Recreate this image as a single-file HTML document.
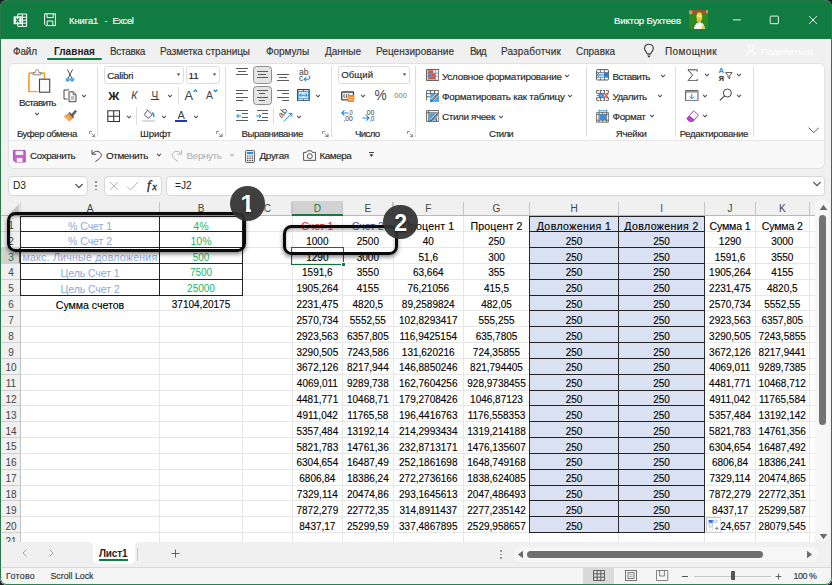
<!DOCTYPE html>
<html lang="ru"><head><meta charset="utf-8"><title>Книга1 - Excel</title><style>
html,body{margin:0;padding:0;background:#1c1e21;}
body{width:832px;height:585px;overflow:hidden;position:relative;font-family:"Liberation Sans",sans-serif;}
#win{position:absolute;left:0;top:0;width:832px;height:585px;background:#f0f0f0;border-radius:7px;overflow:hidden;}
.b{position:absolute;box-sizing:border-box;display:block;}
.t{position:absolute;white-space:nowrap;display:block;}
</style></head><body><div id="win">
<div class="b" style="left:0px;top:0px;width:832px;height:38.5px;background:#107c41;"></div>
<span class="t" style="left:69.00px;top:14.80px;font-size:9.4px;line-height:12px;color:#fff;letter-spacing:-0.049px;-webkit-text-stroke:0.15px #fff;">Книга1</span>
<span class="t" style="left:104.40px;top:14.80px;font-size:9.4px;line-height:12px;color:#fff;">-</span>
<span class="t" style="left:112.40px;top:14.80px;font-size:9.4px;line-height:12px;color:#fff;letter-spacing:-0.357px;-webkit-text-stroke:0.15px #fff;">Excel</span>
<span class="t" style="left:614.00px;top:14.60px;font-size:9.6px;line-height:12px;color:#fff;letter-spacing:-0.168px;-webkit-text-stroke:0.15px #fff;">Виктор Бухтеев</span>
<svg class="b" style="left:731.5px;top:15px;" width="12" height="10" viewBox="0 0 12 10"><path d="M1 4.9H9" stroke="#fff" stroke-width="0.9"/></svg>
<svg class="b" style="left:769px;top:15px;" width="11" height="11" viewBox="0 0 11 11"><rect x="1.2" y="1.1" width="8.2" height="7.6" rx="0.6" fill="none" stroke="#fff" stroke-width="0.9"/></svg>
<svg class="b" style="left:807.5px;top:15px;" width="10" height="10" viewBox="0 0 10 10"><path d="M1 1L9 9M9 1L1 9" stroke="#fff" stroke-width="0.9"/></svg>
<span class="t" style="left:13.00px;top:45.00px;font-size:10px;line-height:13px;color:#333;letter-spacing:-0.146px;-webkit-text-stroke:0.15px #333;">Файл</span>
<span class="t" style="left:110.00px;top:45.00px;font-size:10px;line-height:13px;color:#333;letter-spacing:-0.310px;-webkit-text-stroke:0.15px #333;">Вставка</span>
<span class="t" style="left:160.00px;top:45.00px;font-size:10px;line-height:13px;color:#333;letter-spacing:-0.042px;-webkit-text-stroke:0.15px #333;">Разметка страницы</span>
<span class="t" style="left:266.00px;top:45.00px;font-size:10px;line-height:13px;color:#333;letter-spacing:-0.074px;-webkit-text-stroke:0.15px #333;">Формулы</span>
<span class="t" style="left:325.00px;top:45.00px;font-size:10px;line-height:13px;color:#333;letter-spacing:-0.021px;-webkit-text-stroke:0.15px #333;">Данные</span>
<span class="t" style="left:376.00px;top:45.00px;font-size:10px;line-height:13px;color:#333;letter-spacing:0.056px;-webkit-text-stroke:0.15px #333;">Рецензирование</span>
<span class="t" style="left:470.00px;top:45.00px;font-size:10px;line-height:13px;color:#333;letter-spacing:-0.697px;-webkit-text-stroke:0.15px #333;">Вид</span>
<span class="t" style="left:501.00px;top:45.00px;font-size:10px;line-height:13px;color:#333;letter-spacing:0.153px;-webkit-text-stroke:0.15px #333;">Разработчик</span>
<span class="t" style="left:576.00px;top:45.00px;font-size:10px;line-height:13px;color:#333;letter-spacing:-0.033px;-webkit-text-stroke:0.15px #333;">Справка</span>
<span class="t" style="left:665.00px;top:45.00px;font-size:10px;line-height:13px;color:#333;letter-spacing:0.388px;-webkit-text-stroke:0.15px #333;">Помощник</span>
<span class="t" style="left:54.00px;top:45.00px;font-size:10px;line-height:13px;color:#222;font-weight:bold;letter-spacing:0.047px;">Главная</span>
<div class="b" style="left:47px;top:58px;width:55px;height:2px;background:#107c41;border-radius:1px;"></div>
<span class="t" style="left:761.00px;top:45.50px;font-size:9.6px;line-height:12px;color:#fff;letter-spacing:-0.101px;">Поделиться</span>
<div class="b" style="left:7.5px;top:62.5px;width:817px;height:106px;background:#f9f9f9;border:1px solid #e2e2e2;border-radius:6px;overflow:hidden;"></div>
<div class="b" style="left:8.5px;top:63.5px;width:815px;height:77px;background:#fff;border-radius:5px 5px 0 0;"></div>
<div class="b" style="left:8.5px;top:140.2px;width:815px;height:1.2px;background:#e6e6e6;"></div>
<div class="b" style="left:7.5px;top:175.5px;width:80px;height:20px;background:#fff;border:1px solid #d8d8d8;border-radius:4px;"></div>
<span class="t" style="left:13.00px;top:179.30px;font-size:10.2px;line-height:13px;color:#222;">D3</span>
<svg class="b" style="left:74px;top:182px;" width="10" height="8" viewBox="0 0 10 8"><path d="M1.7000000000000002 2.35 L5 5.65 L8.3 2.35" fill="none" stroke="#4a4a4a" stroke-width="1.25" stroke-linecap="round" stroke-linejoin="round"/></svg>
<div class="b" style="left:95px;top:181.2px;width:1.5px;height:1.5px;background:#7c7c7c;border-radius:1px;"></div>
<div class="b" style="left:95px;top:185px;width:1.5px;height:1.5px;background:#7c7c7c;border-radius:1px;"></div>
<div class="b" style="left:95px;top:188.8px;width:1.5px;height:1.5px;background:#7c7c7c;border-radius:1px;"></div>
<div class="b" style="left:103.5px;top:175.5px;width:58px;height:20px;background:#fff;border:1px solid #d8d8d8;border-radius:4px;"></div>
<svg class="b" style="left:109px;top:181px;" width="10" height="10" viewBox="0 0 10 10"><path d="M1 1L9 9M9 1L1 9" stroke="#b4b4b4" stroke-width="1"/></svg>
<svg class="b" style="left:126px;top:181px;" width="13" height="10" viewBox="0 0 13 10"><path d="M1 5.5L4.5 9L12 1" stroke="#b4b4b4" stroke-width="1" fill="none"/></svg>
<span class="t" style="left:147.00px;top:176.20px;font-size:13.5px;line-height:18px;color:#2a2a2a;font-style:italic;font-family:'Liberation Serif',serif;-webkit-text-stroke:0.3px #2a2a2a;">f</span>
<span class="t" style="left:152.20px;top:180.20px;font-size:10.5px;line-height:14px;color:#2a2a2a;font-style:italic;font-family:'Liberation Serif',serif;-webkit-text-stroke:0.3px #2a2a2a;">x</span>
<div class="b" style="left:165.5px;top:175.5px;width:659px;height:20px;background:#fff;border:1px solid #d8d8d8;border-radius:4px;"></div>
<span class="t" style="left:175.00px;top:179.30px;font-size:10.2px;line-height:13px;color:#222;">=J2</span>
<svg class="b" style="left:812.2px;top:180.2px;" width="10" height="8" viewBox="0 0 10 8"><path d="M1.7000000000000002 2.35 L5 5.65 L8.3 2.35" fill="none" stroke="#4a4a4a" stroke-width="1.25" stroke-linecap="round" stroke-linejoin="round"/></svg>
<svg class="b" style="left:12.5px;top:12.5px;" width="15" height="15" viewBox="0 0 15 15"><path d="M4.8 1H13.6V13.4H4.8Z" fill="none" stroke="#fff" stroke-width="1"/>
<path d="M9.4 1V13.4M4.8 4.2H13.6M4.8 7.2H13.6M4.8 10.2H13.6" stroke="#fff" stroke-width="1"/>
<rect x="0.6" y="3.4" width="8" height="7.8" fill="#fff"/>
<path d="M2.8 5.2L6.4 9.6M6.4 5.2L2.8 9.6" stroke="#107c41" stroke-width="1.2"/></svg>
<svg class="b" style="left:42.6px;top:12.8px;" width="14" height="14" viewBox="0 0 14 14"><path d="M1.6 0.8H12.4V12.6H3L1.6 11.2Z" fill="none" stroke="#fff" stroke-width="1"/>
<path d="M4 0.8V4.6H10.2V0.8M4.2 12.6V8H9.8V12.6" fill="none" stroke="#fff" stroke-width="1"/></svg>
<svg class="b" style="left:689px;top:10px;" width="19" height="19" viewBox="0 0 19 19"><rect width="19" height="19" fill="#2f8a1f"/>
<rect x="0" y="0" width="19" height="4.6" fill="#9a5230"/>
<rect x="0" y="0.4" width="3.4" height="4" fill="#c9986a"/><rect x="17" y="0.2" width="2" height="3.2" fill="#c9986a"/>
<path d="M0 4.6C4 3.6 8 5 11 4.4C14 3.8 17 4.8 19 4.2V7H0Z" fill="#2f8a1f"/>
<ellipse cx="10.4" cy="6.6" rx="2.9" ry="4.4" fill="#f7d21c"/>
<ellipse cx="10" cy="10.2" rx="2.4" ry="2" fill="#e8c02a"/>
<circle cx="9.2" cy="5.8" r="1.1" fill="#fff"/><circle cx="11" cy="5.9" r="0.9" fill="#f3f3ff"/>
<circle cx="9.4" cy="5.9" r="0.35" fill="#333"/>
<path d="M5 19C5.4 15 7.6 12.2 10.4 12.2C13.4 12.2 15.6 14.6 15.8 19Z" fill="#f6f6f6"/>
<rect x="12.8" y="15.6" width="2" height="3.4" fill="#f0c818"/></svg>
<svg class="b" style="left:642.6px;top:43px;" width="11.6" height="15" viewBox="0 0 11.6 15"><path d="M5.9 1.2C8.6 1.2 10.3 3.2 10.3 5.4C10.3 7.6 8.3 9 7.6 10.8H4.2C3.5 9 1.5 7.6 1.5 5.4C1.5 3.2 3.2 1.2 5.9 1.2Z" fill="none" stroke="#3a3a3a" stroke-width="1.1"/>
<path d="M4.3 12H7.5M4.9 13.6H6.9" stroke="#3a3a3a" stroke-width="1.1"/></svg>
<svg class="b" style="left:746px;top:44.4px;" width="11" height="13.4" viewBox="filter:drop-shadow(0 0 0.6px rgba(0,0,0,0.12));"><circle cx="5" cy="3.6" r="2.8" fill="none" stroke="#fff" stroke-width="1.1"/>
<path d="M0.6 13C0.6 9.6 2.4 7.8 5 7.8C6.4 7.8 7.4 8.2 8.2 9M7.6 11.4L10.4 8.6" fill="none" stroke="#fff" stroke-width="1.1"/></svg>
<div class="b" style="left:97.1px;top:66px;width:1px;height:71px;background:#dedede;"></div>
<div class="b" style="left:225.4px;top:66px;width:1px;height:71px;background:#dedede;"></div>
<div class="b" style="left:331.2px;top:66px;width:1px;height:71px;background:#dedede;"></div>
<div class="b" style="left:415.3px;top:66px;width:1px;height:71px;background:#dedede;"></div>
<div class="b" style="left:586.0px;top:66px;width:1px;height:71px;background:#dedede;"></div>
<div class="b" style="left:675.2px;top:66px;width:1px;height:71px;background:#dedede;"></div>
<div class="b" style="left:753.0px;top:66px;width:1px;height:71px;background:#dedede;"></div>
<svg class="b" style="left:27px;top:68px;" width="24" height="26" viewBox="0 0 24 26"><path d="M2 5.2H7.2M13 5.2H17.3V12M11 23.2H2V5.2" fill="none" stroke="#f2a43a" stroke-width="2"/>
<path d="M2.8 6H16.5V23H2.8Z" fill="#fdfdfd"/>
<path d="M6.2 6.8V4.6H8.3C8.3 2.6 9.1 1.6 10.1 1.6C11.1 1.6 11.9 2.6 11.9 4.6H14V6.8Z" fill="#f8f8f8" stroke="#777" stroke-width="0.9"/>
<rect x="12.5" y="11.2" width="10.2" height="13" fill="#fbfbfb" stroke="#444" stroke-width="1.1"/></svg>
<span class="t" style="left:19.00px;top:96.10px;font-size:9.9px;line-height:13px;color:#262626;letter-spacing:-0.621px;-webkit-text-stroke:0.15px #262626;">Вставить</span>
<svg class="b" style="left:32.1px;top:110.4px;" width="10" height="8" viewBox="0 0 10 8"><path d="M3.35 3.175 L5 4.825 L6.65 3.175" fill="none" stroke="#555" stroke-width="1.05" stroke-linecap="round" stroke-linejoin="round"/></svg>
<svg class="b" style="left:64px;top:69px;" width="12" height="13" viewBox="0 0 12 13"><path d="M3.4 0.4L7.9 9.4M8.6 0.4L4.1 9.4" stroke="#444" stroke-width="0.9" fill="none"/>
<circle cx="3.8" cy="10.6" r="1.6" fill="#6cb4ea" stroke="#2a8fdc" stroke-width="0.9"/><circle cx="8.2" cy="10.6" r="1.6" fill="#6cb4ea" stroke="#2a8fdc" stroke-width="0.9"/></svg>
<svg class="b" style="left:62.5px;top:89px;" width="14" height="13.5" viewBox="0 0 14 13.5"><path d="M6 1H1V10H4.5" fill="none" stroke="#444" stroke-width="1"/>
<path d="M6 2.8H10.3L13 5.5V12.7H6Z" fill="#fbfbfb" stroke="#444" stroke-width="1"/>
<path d="M10.2 2.9V5.7H12.9" fill="none" stroke="#444" stroke-width="0.8"/>
<path d="M7.8 8H11.3M7.8 10H11.3" stroke="#666" stroke-width="0.8"/></svg>
<svg class="b" style="left:79.3px;top:91.5px;" width="10" height="8" viewBox="0 0 10 8"><path d="M3.35 3.175 L5 4.825 L6.65 3.175" fill="none" stroke="#555" stroke-width="1.05" stroke-linecap="round" stroke-linejoin="round"/></svg>
<svg class="b" style="left:62.5px;top:108.5px;" width="14.5" height="13.5" viewBox="0 0 14.5 13.5"><path d="M1 7.6L6.3 3.4L10.7 8.7L6.2 12.6Z" fill="#f3923b"/>
<path d="M2.9 8.2L6.2 11.6M4.3 7L7.4 10.4" stroke="#fbe3cc" stroke-width="0.8"/>
<path d="M6.3 3.4L10.7 8.7" stroke="#444" stroke-width="1.2"/>
<path d="M8.4 5.4L12.2 1.2L13.6 2.4L10 6.9Z" fill="#6a6a6a" stroke="#444" stroke-width="0.6"/></svg>
<span class="t" style="left:16.90px;top:127.70px;font-size:9.6px;line-height:12px;color:#262626;letter-spacing:-0.436px;-webkit-text-stroke:0.15px #262626;">Буфер обмена</span>
<svg class="b" style="left:88.5px;top:130.5px;" width="6.5" height="6.5" viewBox="0 0 6.5 6.5"><path d="M0.5 3V0.5H3M6 2.5V6H2.5M2.6 2.6L5.6 5.6M5.8 3.4V5.8H3.4" fill="none" stroke="#666" stroke-width="0.7"/></svg>
<div class="b" style="left:104.3px;top:66px;width:79.5px;height:18px;background:#fff;border:1px solid #dcdcdc;border-radius:3px;"></div>
<span class="t" style="left:107.20px;top:68.50px;font-size:9.9px;line-height:13px;color:#262626;letter-spacing:-0.294px;-webkit-text-stroke:0.15px #262626;">Calibri</span>
<svg class="b" style="left:176.4px;top:73px;" width="5" height="3.4" viewBox="0 0 5 3.4"><path d="M0.7 0.4H4.3L2.5 2.8Z" fill="#444"/></svg>
<div class="b" style="left:186.4px;top:66px;width:33.6px;height:18px;background:#fff;border:1px solid #dcdcdc;border-radius:3px;"></div>
<span class="t" style="left:188.60px;top:68.50px;font-size:9.9px;line-height:13px;color:#262626;-webkit-text-stroke:0.15px #262626;">11</span>
<svg class="b" style="left:211.6px;top:73px;" width="5" height="3.4" viewBox="0 0 5 3.4"><path d="M0.7 0.4H4.3L2.5 2.8Z" fill="#444"/></svg>
<span class="t" style="left:108.92px;top:88.50px;font-size:10.8px;line-height:14px;color:#222;font-weight:bold;transform:scaleX(1.13);">Ж</span>
<span class="t" style="left:131.17px;top:88.50px;font-size:10.4px;line-height:14px;color:#3c3c3c;font-style:italic;">К</span>
<span class="t" style="left:151.47px;top:88.70px;font-size:10px;line-height:13px;color:#3c3c3c;">Ч</span>
<div class="b" style="left:150.9px;top:99.3px;width:7.8px;height:0.9px;background:#333;"></div>
<svg class="b" style="left:164.9px;top:92px;" width="10" height="8" viewBox="0 0 10 8"><path d="M3.35 3.175 L5 4.825 L6.65 3.175" fill="none" stroke="#555" stroke-width="1.05" stroke-linecap="round" stroke-linejoin="round"/></svg>
<div class="b" style="left:177.7px;top:86.6px;width:1px;height:17.900000000000006px;background:#dedede;"></div>
<span class="t" style="left:184.43px;top:86.70px;font-size:12.8px;line-height:17px;color:#404040;">A</span>
<svg class="b" style="left:192.6px;top:88.6px;" width="5" height="3.4" viewBox="0 0 5 3.4"><path d="M0.7 2.9L2.5 1L4.3 2.9" fill="none" stroke="#1e8ad6" stroke-width="1.3"/></svg>
<span class="t" style="left:206.03px;top:89.40px;font-size:10.4px;line-height:14px;color:#404040;">A</span>
<svg class="b" style="left:212.6px;top:88.8px;" width="5" height="3.4" viewBox="0 0 5 3.4"><path d="M0.7 0.7L2.5 2.6L4.3 0.7" fill="none" stroke="#1e8ad6" stroke-width="1.3"/></svg>
<svg class="b" style="left:106.5px;top:109.5px;" width="13.5" height="12.5" viewBox="0 0 13.5 12.5"><path d="M0.8 0.8H12.6V11.6H0.8ZM6.7 0.8V11.6M0.8 6.2H12.6" fill="none" stroke="#333" stroke-width="1.1"/></svg>
<svg class="b" style="left:123.6px;top:112.5px;" width="10" height="8" viewBox="0 0 10 8"><path d="M3.35 3.175 L5 4.825 L6.65 3.175" fill="none" stroke="#555" stroke-width="1.05" stroke-linecap="round" stroke-linejoin="round"/></svg>
<div class="b" style="left:136.4px;top:107px;width:1px;height:18px;background:#dedede;"></div>
<svg class="b" style="left:143px;top:108.5px;" width="12" height="10.5" viewBox="0 0 12 10.5"><path d="M4.6 1.2L9.2 5.6L5.2 9.4L1.2 5.6Z" fill="#fbfbfb" stroke="#444" stroke-width="0.9"/>
<path d="M4.6 1.2L3.6 0.3" stroke="#444" stroke-width="0.9"/>
<path d="M9.2 3.8C10.5 4.4 10.9 6.2 10.6 7.9" fill="none" stroke="#1e8ad6" stroke-width="1.5"/></svg>
<div class="b" style="left:142px;top:119.6px;width:12.8px;height:2.5px;background:#d5dcf0;"></div>
<svg class="b" style="left:158.6px;top:112.5px;" width="10" height="8" viewBox="0 0 10 8"><path d="M3.35 3.175 L5 4.825 L6.65 3.175" fill="none" stroke="#555" stroke-width="1.05" stroke-linecap="round" stroke-linejoin="round"/></svg>
<span class="t" style="left:177.53px;top:107.70px;font-size:11px;line-height:14px;color:#404040;">A</span>
<div class="b" style="left:174.7px;top:119.6px;width:12.6px;height:2.5px;background:#1f3d99;"></div>
<svg class="b" style="left:191px;top:112.5px;" width="10" height="8" viewBox="0 0 10 8"><path d="M3.35 3.175 L5 4.825 L6.65 3.175" fill="none" stroke="#555" stroke-width="1.05" stroke-linecap="round" stroke-linejoin="round"/></svg>
<span class="t" style="left:140.00px;top:127.70px;font-size:9.6px;line-height:12px;color:#262626;letter-spacing:-0.117px;-webkit-text-stroke:0.15px #262626;">Шрифт</span>
<svg class="b" style="left:216.3px;top:130.5px;" width="6.5" height="6.5" viewBox="0 0 6.5 6.5"><path d="M0.5 3V0.5H3M6 2.5V6H2.5M2.6 2.6L5.6 5.6M5.8 3.4V5.8H3.4" fill="none" stroke="#666" stroke-width="0.7"/></svg>
<div class="b" style="left:253px;top:65.6px;width:18.6px;height:18.6px;background:#e4e4e4;border:1px solid #8e8e8e;border-radius:3.5px;"></div>
<div class="b" style="left:253px;top:86px;width:18.6px;height:18.6px;background:#e4e4e4;border:1px solid #8e8e8e;border-radius:3.5px;"></div>
<div class="b" style="left:236.4px;top:68.22500000000001px;width:11.2px;height:0.95px;background:#5c5c5c;"></div>
<div class="b" style="left:238.0px;top:71.325px;width:8.0px;height:0.95px;background:#5c5c5c;"></div>
<div class="b" style="left:236.4px;top:74.42500000000001px;width:11.2px;height:0.95px;background:#5c5c5c;"></div>
<div class="b" style="left:256.6px;top:71.025px;width:11.2px;height:0.95px;background:#5c5c5c;"></div>
<div class="b" style="left:258.20000000000005px;top:74.22500000000001px;width:8.0px;height:0.95px;background:#5c5c5c;"></div>
<div class="b" style="left:256.6px;top:77.42500000000001px;width:11.2px;height:0.95px;background:#5c5c5c;"></div>
<div class="b" style="left:277.4px;top:73.825px;width:11.2px;height:0.95px;background:#5c5c5c;"></div>
<div class="b" style="left:279.0px;top:76.92500000000001px;width:8.0px;height:0.95px;background:#5c5c5c;"></div>
<div class="b" style="left:277.4px;top:80.025px;width:11.2px;height:0.95px;background:#5c5c5c;"></div>
<span class="t" style="left:299.00px;top:66.50px;font-size:8.6px;line-height:11px;color:#444;letter-spacing:-0.083px;">ab</span>
<span class="t" style="left:299.00px;top:72.70px;font-size:8.6px;line-height:11px;color:#444;">c</span>
<svg class="b" style="left:303px;top:74.8px;" width="8" height="7" viewBox="0 0 8 7"><path d="M5.6 0.8C7.4 1.6 7.4 4.2 5 4.2H1.2M3.2 2.2L1.1 4.2L3.2 6.2" fill="none" stroke="#1e8ad6" stroke-width="1.05"/></svg>
<div class="b" style="left:236.4px;top:90.125px;width:11.2px;height:0.95px;background:#5c5c5c;"></div>
<div class="b" style="left:236.4px;top:93.325px;width:6.5px;height:0.95px;background:#5c5c5c;"></div>
<div class="b" style="left:236.4px;top:96.525px;width:11.2px;height:0.95px;background:#5c5c5c;"></div>
<div class="b" style="left:236.4px;top:99.72500000000001px;width:6.5px;height:0.95px;background:#5c5c5c;"></div>
<div class="b" style="left:256.6px;top:90.125px;width:11.2px;height:0.95px;background:#5c5c5c;"></div>
<div class="b" style="left:258.90000000000003px;top:93.325px;width:6.599999999999999px;height:0.95px;background:#5c5c5c;"></div>
<div class="b" style="left:256.6px;top:96.525px;width:11.2px;height:0.95px;background:#5c5c5c;"></div>
<div class="b" style="left:258.90000000000003px;top:99.72500000000001px;width:6.599999999999999px;height:0.95px;background:#5c5c5c;"></div>
<div class="b" style="left:277.4px;top:90.125px;width:11.2px;height:0.95px;background:#5c5c5c;"></div>
<div class="b" style="left:282.09999999999997px;top:93.325px;width:6.499999999999999px;height:0.95px;background:#5c5c5c;"></div>
<div class="b" style="left:277.4px;top:96.525px;width:11.2px;height:0.95px;background:#5c5c5c;"></div>
<div class="b" style="left:282.09999999999997px;top:99.72500000000001px;width:6.499999999999999px;height:0.95px;background:#5c5c5c;"></div>
<svg class="b" style="left:296.8px;top:88.8px;" width="12.8" height="12.4" viewBox="0 0 12.8 12.4"><rect x="0.6" y="0.6" width="11.6" height="11.2" fill="#fff" stroke="#3a3a3a" stroke-width="1.1"/>
<rect x="1.2" y="2.6" width="10.4" height="7.2" fill="#d4e9fa" stroke="#2b8be0" stroke-width="0.9"/>
<path d="M6.4 0.6V2.2M6.4 10.2V11.8" stroke="#3a3a3a" stroke-width="0.8"/>
<path d="M2.6 6.2H10.2M4.3 4.5L2.6 6.2L4.3 7.9M8.5 4.5L10.2 6.2L8.5 7.9" fill="none" stroke="#1e8ad6" stroke-width="1"/></svg>
<svg class="b" style="left:313.4px;top:92px;" width="10" height="8" viewBox="0 0 10 8"><path d="M3.35 3.175 L5 4.825 L6.65 3.175" fill="none" stroke="#555" stroke-width="1.05" stroke-linecap="round" stroke-linejoin="round"/></svg>
<div class="b" style="left:236.4px;top:110.125px;width:11.2px;height:0.95px;background:#5c5c5c;"></div>
<div class="b" style="left:241.70000000000002px;top:113.42500000000001px;width:5.8999999999999995px;height:0.95px;background:#5c5c5c;"></div>
<div class="b" style="left:241.70000000000002px;top:116.72500000000001px;width:5.8999999999999995px;height:0.95px;background:#5c5c5c;"></div>
<div class="b" style="left:236.4px;top:120.025px;width:11.2px;height:0.95px;background:#5c5c5c;"></div>
<svg class="b" style="left:236px;top:112.6px;" width="5.5" height="6" viewBox="0 0 5.5 6"><path d="M5.2 3H0.8M2.6 1L0.7 3L2.6 5" fill="none" stroke="#1e8ad6" stroke-width="1"/></svg>
<div class="b" style="left:256.6px;top:110.125px;width:11.2px;height:0.95px;background:#5c5c5c;"></div>
<div class="b" style="left:261.90000000000003px;top:113.42500000000001px;width:5.8999999999999995px;height:0.95px;background:#5c5c5c;"></div>
<div class="b" style="left:261.90000000000003px;top:116.72500000000001px;width:5.8999999999999995px;height:0.95px;background:#5c5c5c;"></div>
<div class="b" style="left:256.6px;top:120.025px;width:11.2px;height:0.95px;background:#5c5c5c;"></div>
<svg class="b" style="left:256.2px;top:112.6px;" width="5.5" height="6" viewBox="0 0 5.5 6"><path d="M0.3 3H4.7M2.9 1L4.8 3L2.9 5" fill="none" stroke="#1e8ad6" stroke-width="1"/></svg>
<div class="b" style="left:273.2px;top:107px;width:1px;height:18px;background:#dedede;"></div>
<svg class="b" style="left:278.5px;top:109px;" width="14.5" height="13" viewBox="0 0 14.5 13"><text x="0" y="0" font-size="9" fill="#444" font-family="Liberation Sans, sans-serif" transform="translate(2.6,9.4) rotate(-50)">ab</text>
<path d="M4.8 12.4L12.6 4.6M9.6 4.4H12.8V7.6" fill="none" stroke="#1e8ad6" stroke-width="1"/></svg>
<svg class="b" style="left:293.6px;top:112.5px;" width="10" height="8" viewBox="0 0 10 8"><path d="M3.35 3.175 L5 4.825 L6.65 3.175" fill="none" stroke="#555" stroke-width="1.05" stroke-linecap="round" stroke-linejoin="round"/></svg>
<span class="t" style="left:241.50px;top:127.70px;font-size:9.6px;line-height:12px;color:#262626;letter-spacing:-0.390px;-webkit-text-stroke:0.15px #262626;">Выравнивание</span>
<svg class="b" style="left:322.3px;top:130.5px;" width="6.5" height="6.5" viewBox="0 0 6.5 6.5"><path d="M0.5 3V0.5H3M6 2.5V6H2.5M2.6 2.6L5.6 5.6M5.8 3.4V5.8H3.4" fill="none" stroke="#666" stroke-width="0.7"/></svg>
<div class="b" style="left:338.3px;top:66px;width:71.5px;height:18px;background:#fff;border:1px solid #dcdcdc;border-radius:3px;"></div>
<span class="t" style="left:341.20px;top:69.00px;font-size:9.6px;line-height:12px;color:#262626;letter-spacing:0.082px;-webkit-text-stroke:0.15px #262626;">Общий</span>
<svg class="b" style="left:401.8px;top:73px;" width="5" height="3.4" viewBox="0 0 5 3.4"><path d="M0.7 0.4H4.3L2.5 2.8Z" fill="#444"/></svg>
<svg class="b" style="left:340.8px;top:90.6px;" width="14" height="11.6" viewBox="0 0 14 11.6"><rect x="0.7" y="1" width="11.8" height="7.8" rx="0.6" fill="#fafafa" stroke="#444" stroke-width="1.3"/>
<path d="M3.6 2.8C2.6 3.8 2.6 6 3.6 7M6 2.8C5 3.8 5 6 6 7M8.2 2.8C7.4 3.6 7.2 4.4 7.3 5" fill="none" stroke="#444" stroke-width="0.9"/>
<rect x="6.6" y="4.1" width="6.6" height="7.1" rx="1.3" fill="#ee8a2e"/>
<path d="M7.4 6.4H12.4M7.4 8.7H12.4" stroke="#fbe2c8" stroke-width="0.8"/></svg>
<svg class="b" style="left:357.6px;top:92px;" width="10" height="8" viewBox="0 0 10 8"><path d="M3.35 3.175 L5 4.825 L6.65 3.175" fill="none" stroke="#555" stroke-width="1.05" stroke-linecap="round" stroke-linejoin="round"/></svg>
<span class="t" style="left:373.61px;top:86.20px;font-size:14.6px;line-height:19px;color:#4a4a4a;transform:scaleX(0.94);">%</span>
<span class="t" style="left:394.30px;top:90.50px;font-size:7.4px;line-height:10px;color:#777;letter-spacing:0.084px;">000</span>
<svg class="b" style="left:341.2px;top:109.4px;" width="12.6" height="12.8" viewBox="0 0 12.6 12.8"><path d="M7.4 4H0.8M3.4 1.4L0.8 4L3.4 6.6" fill="none" stroke="#1e8ad6" stroke-width="1.1"/>
<text x="7.4" y="5.6" font-size="7.8" textLength="4.4" font-family="Liberation Sans, sans-serif" fill="#333" lengthAdjust="spacingAndGlyphs">,0</text>
<text x="2.4" y="12.2" font-size="7.8" textLength="9.4" font-family="Liberation Sans, sans-serif" fill="#333" lengthAdjust="spacingAndGlyphs">,00</text></svg>
<svg class="b" style="left:361.6px;top:109.4px;" width="13" height="12.8" viewBox="0 0 13 12.8"><text x="3" y="5.6" font-size="7.8" textLength="9.4" font-family="Liberation Sans, sans-serif" fill="#333" lengthAdjust="spacingAndGlyphs">,00</text>
<path d="M0.4 9H7M4.4 6.4L7 9L4.4 11.6" fill="none" stroke="#1e8ad6" stroke-width="1.1"/>
<text x="7.4" y="12.2" font-size="7.8" textLength="5" font-family="Liberation Sans, sans-serif" fill="#333" lengthAdjust="spacingAndGlyphs">,0</text></svg>
<span class="t" style="left:355.00px;top:127.70px;font-size:9.6px;line-height:12px;color:#262626;letter-spacing:-0.602px;-webkit-text-stroke:0.15px #262626;">Число</span>
<svg class="b" style="left:406.9px;top:130.5px;" width="6.5" height="6.5" viewBox="0 0 6.5 6.5"><path d="M0.5 3V0.5H3M6 2.5V6H2.5M2.6 2.6L5.6 5.6M5.8 3.4V5.8H3.4" fill="none" stroke="#666" stroke-width="0.7"/></svg>
<svg class="b" style="left:425.6px;top:69px;" width="13.4" height="12" viewBox="0 0 13.4 12"><rect x="0.6" y="0.6" width="12.2" height="10.8" fill="#fff" stroke="#4a4a4a" stroke-width="0.9"/>
<rect x="2.4" y="1.2" width="4.8" height="2.8" fill="#ea4a4a"/><rect x="2.4" y="4.4" width="2.8" height="2.8" fill="#2f86dc"/><rect x="5.2" y="4.4" width="4" height="2.8" fill="#ea4a4a"/><rect x="2.4" y="7.6" width="6.8" height="2.9" fill="#ea4a4a"/>
<path d="M0.6 4.2H12.8M0.6 7.4H12.8M9.6 0.6V11.4M2.2 0.6V11.4" stroke="#6a6a6a" stroke-width="0.6"/></svg>
<span class="t" style="left:442.00px;top:69.50px;font-size:9.9px;line-height:13px;color:#262626;letter-spacing:-0.259px;-webkit-text-stroke:0.15px #262626;">Условное форматирование</span>
<svg class="b" style="left:562px;top:72px;" width="10" height="8" viewBox="0 0 10 8"><path d="M3.35 3.175 L5 4.825 L6.65 3.175" fill="none" stroke="#555" stroke-width="1.05" stroke-linecap="round" stroke-linejoin="round"/></svg>
<svg class="b" style="left:425.6px;top:90px;" width="13.6" height="12.2" viewBox="0 0 13.6 12.2"><path d="M0.6 10.4V0.6H12.8V3.8M0.6 3.6H12.8M0.6 6.8H4.4M4.4 0.6V4.4M8.6 0.6V4.4" fill="none" stroke="#4a4a4a" stroke-width="0.85"/>
<rect x="4.4" y="4.2" width="9" height="7.6" fill="#4aa0e6"/>
<path d="M5.4 10.6L12.6 3.2" stroke="#fff" stroke-width="3"/>
<path d="M6.6 9.6L12.6 3.2" stroke="#6b6b6b" stroke-width="1.9"/>
<circle cx="5.6" cy="10.6" r="1.7" fill="#1f7fd6"/></svg>
<span class="t" style="left:442.00px;top:89.70px;font-size:9.9px;line-height:13px;color:#262626;letter-spacing:-0.232px;-webkit-text-stroke:0.15px #262626;">Форматировать как таблицу</span>
<svg class="b" style="left:565px;top:92.2px;" width="10" height="8" viewBox="0 0 10 8"><path d="M3.35 3.175 L5 4.825 L6.65 3.175" fill="none" stroke="#555" stroke-width="1.05" stroke-linecap="round" stroke-linejoin="round"/></svg>
<svg class="b" style="left:425.6px;top:109.8px;" width="13.6" height="12.6" viewBox="0 0 13.6 12.6"><path d="M0.6 0.6H12.8V11.4H0.6ZM0.6 2.8H12.8M2.8 0.6V11.4M10.6 2.8V11.4" fill="none" stroke="#4a4a4a" stroke-width="0.85"/>
<rect x="3.2" y="3.2" width="7.2" height="7.4" fill="#4aa0e6"/>
<path d="M4.6 11L12.4 3.2" stroke="#fff" stroke-width="3"/>
<path d="M5.8 10L12.4 3.2" stroke="#6b6b6b" stroke-width="1.9"/>
<circle cx="4.8" cy="11" r="1.7" fill="#1f7fd6"/></svg>
<span class="t" style="left:442.00px;top:110.30px;font-size:9.9px;line-height:13px;color:#262626;letter-spacing:-0.376px;-webkit-text-stroke:0.15px #262626;">Стили ячеек</span>
<svg class="b" style="left:496px;top:112.8px;" width="10" height="8" viewBox="0 0 10 8"><path d="M3.35 3.175 L5 4.825 L6.65 3.175" fill="none" stroke="#555" stroke-width="1.05" stroke-linecap="round" stroke-linejoin="round"/></svg>
<span class="t" style="left:489.00px;top:127.70px;font-size:9.6px;line-height:12px;color:#262626;letter-spacing:-0.731px;-webkit-text-stroke:0.15px #262626;">Стили</span>
<svg class="b" style="left:596.2px;top:69.2px;" width="13" height="11.6" viewBox="0 0 13 11.6"><rect x="0.6" y="0.6" width="11.8" height="10.4" rx="0.8" fill="#fff" stroke="#4a4a4a" stroke-width="0.9"/>
<path d="M0.6 3.6H12.4M0.6 8.2H12.4M4.4 0.6V3.6M8.4 0.6V3.6M4.4 8.2V11M8.4 8.2V11" stroke="#4a4a4a" stroke-width="0.7"/>
<rect x="1.1" y="4" width="10.8" height="3.8" fill="#cfe6f9"/>
<rect x="8" y="3.9" width="4.4" height="4" fill="#2b7cd3"/>
<path d="M7.4 5.9H1.2M3 4.1L1.1 5.9L3 7.7" fill="none" stroke="#2b8be0" stroke-width="1"/></svg>
<span class="t" style="left:612.60px;top:69.50px;font-size:9.9px;line-height:13px;color:#262626;letter-spacing:-0.583px;-webkit-text-stroke:0.15px #262626;">Вставить</span>
<svg class="b" style="left:657.9px;top:71.6px;" width="10" height="8" viewBox="0 0 10 8"><path d="M3.35 3.175 L5 4.825 L6.65 3.175" fill="none" stroke="#555" stroke-width="1.05" stroke-linecap="round" stroke-linejoin="round"/></svg>
<svg class="b" style="left:596.2px;top:90px;" width="13" height="11.4" viewBox="0 0 13 11.4"><path d="M0.6 0.6H12.4M0.6 10.6H12.4M0.6 3.4H12.4M0.6 7.8H12.4M0.6 0.6V3.4M0.6 7.8V10.6M12.4 0.6V3.4M12.4 7.8V10.6M4.4 0.6V3.4M4.4 7.8V10.6M8.4 0.6V3.4M8.4 7.8V10.6" fill="none" stroke="#4a4a4a" stroke-width="0.85" stroke-dasharray="2.4 0.7"/>
<path d="M0.6 5.6H3" stroke="#2b7cd3" stroke-width="0.9"/>
<rect x="3.2" y="3.8" width="4" height="3.6" fill="#5aa4e8" stroke="#2b6fd0" stroke-width="1"/>
<path d="M8.2 3.6L12.2 7.6M12.2 3.6L8.2 7.6" stroke="#e5352b" stroke-width="1.05"/></svg>
<span class="t" style="left:612.60px;top:89.70px;font-size:9.9px;line-height:13px;color:#262626;letter-spacing:-0.528px;-webkit-text-stroke:0.15px #262626;">Удалить</span>
<svg class="b" style="left:654.9px;top:91.8px;" width="10" height="8" viewBox="0 0 10 8"><path d="M3.35 3.175 L5 4.825 L6.65 3.175" fill="none" stroke="#555" stroke-width="1.05" stroke-linecap="round" stroke-linejoin="round"/></svg>
<svg class="b" style="left:596.2px;top:108.8px;" width="13" height="13.8" viewBox="0 0 13 13.8"><path d="M3 1.8H10.8M3 0.6V3M10.8 0.6V3" stroke="#2b8be0" stroke-width="0.9"/>
<path d="M0.6 3.6H12.4V13.2H0.6ZM0.6 5.4H12.4M0.6 11.2H12.4M3 3.6V13.2M10.4 3.6V13.2M6.7 3.6V5.4M6.7 11.2V13.2" fill="none" stroke="#4a4a4a" stroke-width="0.75"/>
<rect x="3.4" y="5.4" width="6.8" height="5.6" fill="#3c8ee0"/></svg>
<span class="t" style="left:612.60px;top:110.30px;font-size:9.9px;line-height:13px;color:#262626;letter-spacing:-0.361px;-webkit-text-stroke:0.15px #262626;">Формат</span>
<svg class="b" style="left:647px;top:112.4px;" width="10" height="8" viewBox="0 0 10 8"><path d="M3.35 3.175 L5 4.825 L6.65 3.175" fill="none" stroke="#555" stroke-width="1.05" stroke-linecap="round" stroke-linejoin="round"/></svg>
<span class="t" style="left:615.70px;top:127.70px;font-size:9.6px;line-height:12px;color:#262626;letter-spacing:-0.200px;-webkit-text-stroke:0.15px #262626;">Ячейки</span>
<svg class="b" style="left:686.8px;top:68.6px;" width="11.2" height="12.6" viewBox="0 0 11.2 12.6"><path d="M10.2 2.6V0.8H0.9L5.6 6.2L0.9 11.8H10.2V10" fill="none" stroke="#444" stroke-width="1"/></svg>
<svg class="b" style="left:702.3px;top:71px;" width="10" height="8" viewBox="0 0 10 8"><path d="M3.35 3.175 L5 4.825 L6.65 3.175" fill="none" stroke="#555" stroke-width="1.05" stroke-linecap="round" stroke-linejoin="round"/></svg>
<span class="t" style="left:718.60px;top:66.00px;font-size:7.4px;line-height:10px;color:#1e8ad6;font-weight:bold;">А</span>
<span class="t" style="left:718.80px;top:74.10px;font-size:7.2px;line-height:9px;color:#333;font-weight:bold;-webkit-text-stroke:0.15px #333;">Я</span>
<svg class="b" style="left:725px;top:72px;" width="8" height="7.4" viewBox="0 0 8 7.4"><path d="M0.6 0.6H7.2L4.8 3.6V6.6L3 5.6V3.6Z" fill="none" stroke="#444" stroke-width="0.9"/></svg>
<svg class="b" style="left:733.9px;top:71px;" width="10" height="8" viewBox="0 0 10 8"><path d="M3.35 3.175 L5 4.825 L6.65 3.175" fill="none" stroke="#555" stroke-width="1.05" stroke-linecap="round" stroke-linejoin="round"/></svg>
<svg class="b" style="left:685.4px;top:90px;" width="13.6" height="11.4" viewBox="0 0 13.6 11.4"><path d="M0.6 0.6H13V10.8H0.6Z" fill="#fdfdfd" stroke="#444" stroke-width="0.9"/><rect x="1" y="1" width="11.6" height="1.7" fill="#9a9a9a"/>
<path d="M6.8 3.8V8.6M4.6 6.6L6.8 8.8L9 6.6" fill="none" stroke="#1e8ad6" stroke-width="1"/></svg>
<svg class="b" style="left:700.4px;top:91.8px;" width="10" height="8" viewBox="0 0 10 8"><path d="M3.35 3.175 L5 4.825 L6.65 3.175" fill="none" stroke="#555" stroke-width="1.05" stroke-linecap="round" stroke-linejoin="round"/></svg>
<svg class="b" style="left:719px;top:88.4px;" width="14" height="13" viewBox="0 0 14 13"><circle cx="8.4" cy="5" r="4" fill="none" stroke="#444" stroke-width="1"/><path d="M5.6 7.8L0.8 12.4" stroke="#444" stroke-width="1.1"/></svg>
<svg class="b" style="left:733.9px;top:91.8px;" width="10" height="8" viewBox="0 0 10 8"><path d="M3.35 3.175 L5 4.825 L6.65 3.175" fill="none" stroke="#555" stroke-width="1.05" stroke-linecap="round" stroke-linejoin="round"/></svg>
<svg class="b" style="left:685.6px;top:110px;" width="13.4" height="12.4" viewBox="0 0 13.4 12.4"><path d="M7.6 0.8L12.6 5L7 11.4H3.4L0.8 8.6Z" fill="#fff" stroke="#b146c2" stroke-width="1"/>
<path d="M3.4 5.6L8.6 9.8L7 11.4H3.4L0.8 8.6Z" fill="#b146c2"/></svg>
<svg class="b" style="left:700.4px;top:112.4px;" width="10" height="8" viewBox="0 0 10 8"><path d="M3.35 3.175 L5 4.825 L6.65 3.175" fill="none" stroke="#555" stroke-width="1.05" stroke-linecap="round" stroke-linejoin="round"/></svg>
<span class="t" style="left:679.70px;top:127.70px;font-size:9.6px;line-height:12px;color:#262626;letter-spacing:-0.345px;-webkit-text-stroke:0.15px #262626;">Редактирование</span>
<svg class="b" style="left:807.8px;top:127.4px;" width="11.4" height="6.6" viewBox="0 0 11.4 6.6"><path d="M0.6 0.6L5.7 5.8L10.8 0.6" fill="none" stroke="#444" stroke-width="0.9"/></svg>
<svg class="b" style="left:13.3px;top:150px;" width="12.8" height="12.6" viewBox="0 0 12.8 12.6"><path d="M0.6 0.6H12.2V12H2.4L0.6 10.2Z" fill="#c465d2" stroke="#a23cb2" stroke-width="0.9"/>
<rect x="2.6" y="0.9" width="7.6" height="4" fill="#f8f8f8"/><rect x="3.8" y="8" width="5.6" height="4" fill="#f8f8f8"/></svg>
<span class="t" style="left:30.10px;top:149.10px;font-size:9.9px;line-height:13px;color:#262626;letter-spacing:-0.444px;-webkit-text-stroke:0.15px #262626;">Сохранить</span>
<svg class="b" style="left:90.6px;top:149.4px;" width="11.6" height="13" viewBox="0 0 11.6 13"><path d="M1 1V5.2H5.2M1.2 5C3.4 1.6 8 1.6 9.8 4.4C11.4 7 9 10 4.4 12.4" fill="none" stroke="#444" stroke-width="1"/></svg>
<span class="t" style="left:106.00px;top:149.10px;font-size:9.9px;line-height:13px;color:#262626;letter-spacing:-0.392px;-webkit-text-stroke:0.15px #262626;">Отменить</span>
<svg class="b" style="left:154.4px;top:151.4px;" width="10" height="8" viewBox="0 0 10 8"><path d="M3.35 3.175 L5 4.825 L6.65 3.175" fill="none" stroke="#555" stroke-width="1.05" stroke-linecap="round" stroke-linejoin="round"/></svg>
<svg class="b" style="left:171.2px;top:149.4px;" width="11.6" height="13" viewBox="0 0 11.6 13"><path d="M10.6 1V5.2H6.4M10.4 5C8.2 1.6 3.6 1.6 1.8 4.4C0.2 7 2.6 10 7.2 12.4" fill="none" stroke="#b4b4b4" stroke-width="1"/></svg>
<span class="t" style="left:186.60px;top:149.10px;font-size:9.9px;line-height:13px;color:#ababab;letter-spacing:-0.389px;">Вернуть</span>
<svg class="b" style="left:227px;top:151.4px;" width="10" height="8" viewBox="0 0 10 8"><path d="M3.35 3.175 L5 4.825 L6.65 3.175" fill="none" stroke="#b0b0b0" stroke-width="1.05" stroke-linecap="round" stroke-linejoin="round"/></svg>
<svg class="b" style="left:245px;top:149.6px;" width="10" height="13" viewBox="0 0 10 13"><rect x="0.6" y="0.6" width="8.8" height="11.8" rx="0.8" fill="#fbfbfb" stroke="#444" stroke-width="0.9"/>
<rect x="2" y="2" width="6" height="2.2" fill="#2c8be0"/>
<path d="M2 6H3.4M4.3 6H5.7M6.6 6H8M2 8.2H3.4M4.3 8.2H5.7M6.6 8.2H8M2 10.4H3.4M4.3 10.4H5.7M6.6 10.4H8" stroke="#444" stroke-width="1.2"/></svg>
<span class="t" style="left:259.40px;top:149.10px;font-size:9.9px;line-height:13px;color:#262626;letter-spacing:-0.285px;-webkit-text-stroke:0.15px #262626;">Другая</span>
<svg class="b" style="left:303.2px;top:150.4px;" width="13.2" height="11.2" viewBox="0 0 13.2 11.2"><path d="M0.6 2.4H3.4L4.4 0.8H8.4L9.4 2.4H12.6V10.4H0.6Z" fill="none" stroke="#444" stroke-width="0.9"/>
<circle cx="6.8" cy="6.2" r="2.5" fill="none" stroke="#444" stroke-width="0.9"/></svg>
<span class="t" style="left:319.50px;top:149.10px;font-size:9.9px;line-height:13px;color:#262626;letter-spacing:-0.450px;-webkit-text-stroke:0.15px #262626;">Камера</span>
<div class="b" style="left:369.4px;top:152.2px;width:4.4px;height:0.9px;background:#444;"></div>
<svg class="b" style="left:369.2px;top:154.4px;" width="4.8" height="3.4" viewBox="0 0 4.8 3.4"><path d="M0.3 0.3H4.5L2.4 3Z" fill="#444"/></svg>
<div class="b" style="left:20.5px;top:216px;width:794.0px;height:325.70000000000005px;background:#fff;"></div>
<div class="b" style="left:292px;top:201.3px;width:51px;height:15px;background:#d2d2d2;border-bottom:2px solid #107c41;"></div>
<span class="t" style="left:86.66px;top:202.00px;font-size:10px;line-height:13px;color:#444;">A</span>
<span class="t" style="left:197.66px;top:202.00px;font-size:10px;line-height:13px;color:#444;">B</span>
<span class="t" style="left:263.64px;top:202.00px;font-size:10px;line-height:13px;color:#444;">C</span>
<span class="t" style="left:313.74px;top:202.00px;font-size:10px;line-height:13px;color:#107c41;">D</span>
<span class="t" style="left:364.51px;top:202.00px;font-size:10px;line-height:13px;color:#444;">E</span>
<span class="t" style="left:425.20px;top:202.00px;font-size:10px;line-height:13px;color:#444;">F</span>
<span class="t" style="left:492.61px;top:202.00px;font-size:10px;line-height:13px;color:#444;">G</span>
<span class="t" style="left:570.39px;top:202.00px;font-size:10px;line-height:13px;color:#444;">H</span>
<span class="t" style="left:660.16px;top:202.00px;font-size:10px;line-height:13px;color:#444;">I</span>
<span class="t" style="left:727.45px;top:202.00px;font-size:10px;line-height:13px;color:#444;">J</span>
<span class="t" style="left:778.91px;top:202.00px;font-size:10px;line-height:13px;color:#444;">K</span>
<div class="b" style="left:158.9px;top:201.5px;width:1.2px;height:14px;background:#c6c6c6;"></div>
<div class="b" style="left:241.9px;top:201.5px;width:1.2px;height:14px;background:#c6c6c6;"></div>
<div class="b" style="left:291.4px;top:201.5px;width:1.2px;height:14px;background:#c6c6c6;"></div>
<div class="b" style="left:342.09999999999997px;top:201.5px;width:1.2px;height:14px;background:#c6c6c6;"></div>
<div class="b" style="left:392.4px;top:201.5px;width:1.2px;height:14px;background:#c6c6c6;"></div>
<div class="b" style="left:462.9px;top:201.5px;width:1.2px;height:14px;background:#c6c6c6;"></div>
<div class="b" style="left:528.9px;top:201.5px;width:1.2px;height:14px;background:#c6c6c6;"></div>
<div class="b" style="left:617.9px;top:201.5px;width:1.2px;height:14px;background:#c6c6c6;"></div>
<div class="b" style="left:704.0px;top:201.5px;width:1.2px;height:14px;background:#c6c6c6;"></div>
<div class="b" style="left:754.6999999999999px;top:201.5px;width:1.2px;height:14px;background:#c6c6c6;"></div>
<div class="b" style="left:808.6px;top:201.5px;width:1.2px;height:14px;background:#c6c6c6;"></div>
<div class="b" style="left:20px;top:202px;width:1px;height:14px;background:#d0d0d0;"></div>
<svg class="b" style="left:8px;top:202px;" width="12" height="13" viewBox="0 0 12 13"><path d="M11 2V12H1Z" fill="#c6c6c6"/></svg>
<span class="t" style="left:8.22px;top:218.91px;font-size:10px;line-height:13px;color:#444;">1</span>
<div class="b" style="left:1px;top:231.325px;width:19.5px;height:1px;background:#d0d0d0;"></div>
<span class="t" style="left:8.22px;top:234.74px;font-size:10px;line-height:13px;color:#444;">2</span>
<div class="b" style="left:1px;top:247.14999999999998px;width:19.5px;height:1px;background:#d0d0d0;"></div>
<div class="b" style="left:1px;top:247.65px;width:19.5px;height:15.825px;background:#d2d2d2;border-right:2px solid #107c41;"></div>
<span class="t" style="left:8.22px;top:250.56px;font-size:10px;line-height:13px;color:#107c41;">3</span>
<div class="b" style="left:1px;top:262.975px;width:19.5px;height:1px;background:#d0d0d0;"></div>
<span class="t" style="left:8.22px;top:266.39px;font-size:10px;line-height:13px;color:#444;">4</span>
<div class="b" style="left:1px;top:278.8px;width:19.5px;height:1px;background:#d0d0d0;"></div>
<span class="t" style="left:8.22px;top:282.21px;font-size:10px;line-height:13px;color:#444;">5</span>
<div class="b" style="left:1px;top:294.625px;width:19.5px;height:1px;background:#d0d0d0;"></div>
<span class="t" style="left:8.22px;top:298.04px;font-size:10px;line-height:13px;color:#444;">6</span>
<div class="b" style="left:1px;top:310.45px;width:19.5px;height:1px;background:#d0d0d0;"></div>
<span class="t" style="left:8.22px;top:313.86px;font-size:10px;line-height:13px;color:#444;">7</span>
<div class="b" style="left:1px;top:326.275px;width:19.5px;height:1px;background:#d0d0d0;"></div>
<span class="t" style="left:8.22px;top:329.69px;font-size:10px;line-height:13px;color:#444;">8</span>
<div class="b" style="left:1px;top:342.09999999999997px;width:19.5px;height:1px;background:#d0d0d0;"></div>
<span class="t" style="left:8.22px;top:345.51px;font-size:10px;line-height:13px;color:#444;">9</span>
<div class="b" style="left:1px;top:357.925px;width:19.5px;height:1px;background:#d0d0d0;"></div>
<span class="t" style="left:5.44px;top:361.34px;font-size:10px;line-height:13px;color:#444;">10</span>
<div class="b" style="left:1px;top:373.74999999999994px;width:19.5px;height:1px;background:#d0d0d0;"></div>
<span class="t" style="left:5.81px;top:377.16px;font-size:10px;line-height:13px;color:#444;">11</span>
<div class="b" style="left:1px;top:389.575px;width:19.5px;height:1px;background:#d0d0d0;"></div>
<span class="t" style="left:5.44px;top:392.99px;font-size:10px;line-height:13px;color:#444;">12</span>
<div class="b" style="left:1px;top:405.4px;width:19.5px;height:1px;background:#d0d0d0;"></div>
<span class="t" style="left:5.44px;top:408.81px;font-size:10px;line-height:13px;color:#444;">13</span>
<div class="b" style="left:1px;top:421.22499999999997px;width:19.5px;height:1px;background:#d0d0d0;"></div>
<span class="t" style="left:5.44px;top:424.64px;font-size:10px;line-height:13px;color:#444;">14</span>
<div class="b" style="left:1px;top:437.05px;width:19.5px;height:1px;background:#d0d0d0;"></div>
<span class="t" style="left:5.44px;top:440.46px;font-size:10px;line-height:13px;color:#444;">15</span>
<div class="b" style="left:1px;top:452.87499999999994px;width:19.5px;height:1px;background:#d0d0d0;"></div>
<span class="t" style="left:5.44px;top:456.29px;font-size:10px;line-height:13px;color:#444;">16</span>
<div class="b" style="left:1px;top:468.7px;width:19.5px;height:1px;background:#d0d0d0;"></div>
<span class="t" style="left:5.44px;top:472.11px;font-size:10px;line-height:13px;color:#444;">17</span>
<div class="b" style="left:1px;top:484.525px;width:19.5px;height:1px;background:#d0d0d0;"></div>
<span class="t" style="left:5.44px;top:487.94px;font-size:10px;line-height:13px;color:#444;">18</span>
<div class="b" style="left:1px;top:500.34999999999997px;width:19.5px;height:1px;background:#d0d0d0;"></div>
<span class="t" style="left:5.44px;top:503.76px;font-size:10px;line-height:13px;color:#444;">19</span>
<div class="b" style="left:1px;top:516.175px;width:19.5px;height:1px;background:#d0d0d0;"></div>
<span class="t" style="left:5.44px;top:519.59px;font-size:10px;line-height:13px;color:#444;">20</span>
<div class="b" style="left:1px;top:532.0px;width:19.5px;height:1px;background:#d0d0d0;"></div>
<span class="t" style="left:5.44px;top:535.41px;font-size:10px;line-height:13px;color:#444;">21</span>
<div class="b" style="left:1px;top:547.825px;width:19.5px;height:1px;background:#d0d0d0;"></div>
<div class="b" style="left:19.9px;top:216px;width:1.2px;height:325.70000000000005px;background:#c2c2c2;"></div>
<div class="b" style="left:20.5px;top:231.325px;width:794.0px;height:1px;background:#e7e7e7;"></div>
<div class="b" style="left:20.5px;top:247.14999999999998px;width:794.0px;height:1px;background:#e7e7e7;"></div>
<div class="b" style="left:20.5px;top:262.975px;width:794.0px;height:1px;background:#e7e7e7;"></div>
<div class="b" style="left:20.5px;top:278.8px;width:794.0px;height:1px;background:#e7e7e7;"></div>
<div class="b" style="left:20.5px;top:294.625px;width:794.0px;height:1px;background:#e7e7e7;"></div>
<div class="b" style="left:20.5px;top:310.45px;width:794.0px;height:1px;background:#e7e7e7;"></div>
<div class="b" style="left:20.5px;top:326.275px;width:794.0px;height:1px;background:#e7e7e7;"></div>
<div class="b" style="left:20.5px;top:342.09999999999997px;width:794.0px;height:1px;background:#e7e7e7;"></div>
<div class="b" style="left:20.5px;top:357.925px;width:794.0px;height:1px;background:#e7e7e7;"></div>
<div class="b" style="left:20.5px;top:373.74999999999994px;width:794.0px;height:1px;background:#e7e7e7;"></div>
<div class="b" style="left:20.5px;top:389.575px;width:794.0px;height:1px;background:#e7e7e7;"></div>
<div class="b" style="left:20.5px;top:405.4px;width:794.0px;height:1px;background:#e7e7e7;"></div>
<div class="b" style="left:20.5px;top:421.22499999999997px;width:794.0px;height:1px;background:#e7e7e7;"></div>
<div class="b" style="left:20.5px;top:437.05px;width:794.0px;height:1px;background:#e7e7e7;"></div>
<div class="b" style="left:20.5px;top:452.87499999999994px;width:794.0px;height:1px;background:#e7e7e7;"></div>
<div class="b" style="left:20.5px;top:468.7px;width:794.0px;height:1px;background:#e7e7e7;"></div>
<div class="b" style="left:20.5px;top:484.525px;width:794.0px;height:1px;background:#e7e7e7;"></div>
<div class="b" style="left:20.5px;top:500.34999999999997px;width:794.0px;height:1px;background:#e7e7e7;"></div>
<div class="b" style="left:20.5px;top:516.175px;width:794.0px;height:1px;background:#e7e7e7;"></div>
<div class="b" style="left:20.5px;top:532.0px;width:794.0px;height:1px;background:#e7e7e7;"></div>
<div class="b" style="left:20.5px;top:547.825px;width:794.0px;height:1px;background:#e7e7e7;"></div>
<div class="b" style="left:159.0px;top:216px;width:1px;height:325.70000000000005px;background:#e7e7e7;"></div>
<div class="b" style="left:242.0px;top:216px;width:1px;height:325.70000000000005px;background:#e7e7e7;"></div>
<div class="b" style="left:291.5px;top:216px;width:1px;height:325.70000000000005px;background:#e7e7e7;"></div>
<div class="b" style="left:342.2px;top:216px;width:1px;height:325.70000000000005px;background:#e7e7e7;"></div>
<div class="b" style="left:392.5px;top:216px;width:1px;height:325.70000000000005px;background:#e7e7e7;"></div>
<div class="b" style="left:463.0px;top:216px;width:1px;height:325.70000000000005px;background:#e7e7e7;"></div>
<div class="b" style="left:529.0px;top:216px;width:1px;height:325.70000000000005px;background:#e7e7e7;"></div>
<div class="b" style="left:618.0px;top:216px;width:1px;height:325.70000000000005px;background:#e7e7e7;"></div>
<div class="b" style="left:704.1px;top:216px;width:1px;height:325.70000000000005px;background:#e7e7e7;"></div>
<div class="b" style="left:754.8px;top:216px;width:1px;height:325.70000000000005px;background:#e7e7e7;"></div>
<div class="b" style="left:808.7px;top:216px;width:1px;height:325.70000000000005px;background:#e7e7e7;"></div>
<div class="b" style="left:529.5px;top:216px;width:175.1px;height:316.5px;background:#d9e1f2;"></div>
<div class="b" style="left:529.5px;top:215.5px;width:175.6px;height:1px;background:#222;"></div>
<div class="b" style="left:529.5px;top:231.325px;width:175.6px;height:1px;background:#222;"></div>
<div class="b" style="left:529.5px;top:247.15px;width:175.6px;height:1px;background:#222;"></div>
<div class="b" style="left:529.5px;top:262.975px;width:175.6px;height:1px;background:#222;"></div>
<div class="b" style="left:529.5px;top:278.8px;width:175.6px;height:1px;background:#222;"></div>
<div class="b" style="left:529.5px;top:294.625px;width:175.6px;height:1px;background:#222;"></div>
<div class="b" style="left:529.5px;top:310.45px;width:175.6px;height:1px;background:#222;"></div>
<div class="b" style="left:529.5px;top:326.275px;width:175.6px;height:1px;background:#222;"></div>
<div class="b" style="left:529.5px;top:342.1px;width:175.6px;height:1px;background:#222;"></div>
<div class="b" style="left:529.5px;top:357.92499999999995px;width:175.6px;height:1px;background:#222;"></div>
<div class="b" style="left:529.5px;top:373.75px;width:175.6px;height:1px;background:#222;"></div>
<div class="b" style="left:529.5px;top:389.575px;width:175.6px;height:1px;background:#222;"></div>
<div class="b" style="left:529.5px;top:405.4px;width:175.6px;height:1px;background:#222;"></div>
<div class="b" style="left:529.5px;top:421.225px;width:175.6px;height:1px;background:#222;"></div>
<div class="b" style="left:529.5px;top:437.04999999999995px;width:175.6px;height:1px;background:#222;"></div>
<div class="b" style="left:529.5px;top:452.875px;width:175.6px;height:1px;background:#222;"></div>
<div class="b" style="left:529.5px;top:468.7px;width:175.6px;height:1px;background:#222;"></div>
<div class="b" style="left:529.5px;top:484.525px;width:175.6px;height:1px;background:#222;"></div>
<div class="b" style="left:529.5px;top:500.34999999999997px;width:175.6px;height:1px;background:#222;"></div>
<div class="b" style="left:529.5px;top:516.175px;width:175.6px;height:1px;background:#222;"></div>
<div class="b" style="left:529.5px;top:532.0px;width:175.6px;height:1px;background:#222;"></div>
<div class="b" style="left:528.9px;top:215.5px;width:1.2px;height:317.5px;background:#2a2a2a;"></div>
<div class="b" style="left:617.9px;top:215.5px;width:1.2px;height:317.5px;background:#2a2a2a;"></div>
<div class="b" style="left:704.0px;top:215.5px;width:1.2px;height:317.5px;background:#2a2a2a;"></div>
<div class="b" style="left:20.5px;top:215.5px;width:222.5px;height:1px;background:#222;"></div>
<div class="b" style="left:20.5px;top:231.325px;width:222.5px;height:1px;background:#222;"></div>
<div class="b" style="left:20.5px;top:247.15px;width:222.5px;height:1px;background:#222;"></div>
<div class="b" style="left:20.5px;top:262.975px;width:222.5px;height:1px;background:#222;"></div>
<div class="b" style="left:20.5px;top:278.8px;width:222.5px;height:1px;background:#222;"></div>
<div class="b" style="left:20.5px;top:294.625px;width:222.5px;height:1px;background:#222;"></div>
<div class="b" style="left:20.0px;top:215.5px;width:1px;height:80.125px;background:#222;"></div>
<div class="b" style="left:159.0px;top:215.5px;width:1px;height:80.125px;background:#222;"></div>
<div class="b" style="left:242.0px;top:215.5px;width:1px;height:80.125px;background:#222;"></div>
<span class="t" style="left:68.00px;top:218.51px;font-size:10.6px;line-height:14px;color:#8ea9db;letter-spacing:-0.083px;">% Счет 1</span>
<span class="t" style="left:193.34px;top:218.51px;font-size:10.6px;line-height:14px;color:#21b868;">4%</span>
<span class="t" style="left:68.00px;top:234.34px;font-size:10.6px;line-height:14px;color:#8ea9db;letter-spacing:-0.083px;">% Счет 2</span>
<span class="t" style="left:190.39px;top:234.34px;font-size:10.6px;line-height:14px;color:#21b868;">10%</span>
<span class="t" style="left:22.50px;top:250.16px;font-size:10.6px;line-height:14px;color:#8ea9db;letter-spacing:0.222px;">макс. Личные довложения</span>
<span class="t" style="left:192.66px;top:250.66px;font-size:10.0px;line-height:13px;color:#21b868;">500</span>
<span class="t" style="left:60.50px;top:265.99px;font-size:10.6px;line-height:14px;color:#8ea9db;letter-spacing:-0.121px;">Цель Счет 1</span>
<span class="t" style="left:189.88px;top:266.49px;font-size:10.0px;line-height:13px;color:#21b868;">7500</span>
<span class="t" style="left:60.50px;top:281.81px;font-size:10.6px;line-height:14px;color:#8ea9db;letter-spacing:-0.121px;">Цель Счет 2</span>
<span class="t" style="left:187.10px;top:282.31px;font-size:10.0px;line-height:13px;color:#21b868;">25000</span>
<span class="t" style="left:55.75px;top:297.64px;font-size:10.6px;line-height:14px;color:#000;letter-spacing:-0.022px;-webkit-text-stroke:0.12px #000;">Сумма счетов</span>
<span class="t" style="left:171.80px;top:298.14px;font-size:10.0px;line-height:13px;color:#000;-webkit-text-stroke:0.12px #000;">37104,20175</span>
<span class="t" style="left:301.35px;top:218.51px;font-size:10.6px;line-height:14px;color:#ff2a2a;letter-spacing:-0.050px;">Счет 1</span>
<span class="t" style="left:351.85px;top:218.51px;font-size:10.6px;line-height:14px;color:#3b5ea8;letter-spacing:-0.050px;">Счет 2</span>
<span class="t" style="left:402.25px;top:218.51px;font-size:10.6px;line-height:14px;color:#000;letter-spacing:0.133px;-webkit-text-stroke:0.12px #000;">Процент 1</span>
<span class="t" style="left:470.50px;top:218.51px;font-size:10.6px;line-height:14px;color:#000;letter-spacing:0.133px;-webkit-text-stroke:0.12px #000;">Процент 2</span>
<span class="t" style="left:536.70px;top:218.51px;font-size:10.6px;line-height:14px;color:#000;letter-spacing:0.383px;-webkit-text-stroke:0.12px #000;">Довложения 1</span>
<span class="t" style="left:624.25px;top:218.51px;font-size:10.6px;line-height:14px;color:#000;letter-spacing:0.383px;-webkit-text-stroke:0.12px #000;">Довложения 2</span>
<span class="t" style="left:709.45px;top:218.51px;font-size:10.6px;line-height:14px;color:#000;letter-spacing:-0.164px;-webkit-text-stroke:0.12px #000;">Сумма 1</span>
<span class="t" style="left:761.75px;top:218.51px;font-size:10.6px;line-height:14px;color:#000;letter-spacing:-0.164px;-webkit-text-stroke:0.12px #000;">Сумма 2</span>
<span class="t" style="left:306.23px;top:234.84px;font-size:10.0px;line-height:13px;color:#000;-webkit-text-stroke:0.12px #000;">1000</span>
<span class="t" style="left:356.73px;top:234.84px;font-size:10.0px;line-height:13px;color:#000;-webkit-text-stroke:0.12px #000;">2500</span>
<span class="t" style="left:422.69px;top:234.84px;font-size:10.0px;line-height:13px;color:#000;-webkit-text-stroke:0.12px #000;">40</span>
<span class="t" style="left:488.16px;top:234.84px;font-size:10.0px;line-height:13px;color:#000;-webkit-text-stroke:0.12px #000;">250</span>
<span class="t" style="left:565.66px;top:234.84px;font-size:10.0px;line-height:13px;color:#000;-webkit-text-stroke:0.12px #000;">250</span>
<span class="t" style="left:653.21px;top:234.84px;font-size:10.0px;line-height:13px;color:#000;-webkit-text-stroke:0.12px #000;">250</span>
<span class="t" style="left:718.83px;top:234.84px;font-size:10.0px;line-height:13px;color:#000;-webkit-text-stroke:0.12px #000;">1290</span>
<span class="t" style="left:771.13px;top:234.84px;font-size:10.0px;line-height:13px;color:#000;-webkit-text-stroke:0.12px #000;">3000</span>
<span class="t" style="left:306.23px;top:250.66px;font-size:10.0px;line-height:13px;color:#000;-webkit-text-stroke:0.12px #000;">1290</span>
<span class="t" style="left:356.73px;top:250.66px;font-size:10.0px;line-height:13px;color:#000;-webkit-text-stroke:0.12px #000;">3000</span>
<span class="t" style="left:418.52px;top:250.66px;font-size:10.0px;line-height:13px;color:#000;-webkit-text-stroke:0.12px #000;">51,6</span>
<span class="t" style="left:488.16px;top:250.66px;font-size:10.0px;line-height:13px;color:#000;-webkit-text-stroke:0.12px #000;">300</span>
<span class="t" style="left:565.66px;top:250.66px;font-size:10.0px;line-height:13px;color:#000;-webkit-text-stroke:0.12px #000;">250</span>
<span class="t" style="left:653.21px;top:250.66px;font-size:10.0px;line-height:13px;color:#000;-webkit-text-stroke:0.12px #000;">250</span>
<span class="t" style="left:714.66px;top:250.66px;font-size:10.0px;line-height:13px;color:#000;-webkit-text-stroke:0.12px #000;">1591,6</span>
<span class="t" style="left:771.13px;top:250.66px;font-size:10.0px;line-height:13px;color:#000;-webkit-text-stroke:0.12px #000;">3550</span>
<span class="t" style="left:302.06px;top:266.49px;font-size:10.0px;line-height:13px;color:#000;-webkit-text-stroke:0.12px #000;">1591,6</span>
<span class="t" style="left:356.73px;top:266.49px;font-size:10.0px;line-height:13px;color:#000;-webkit-text-stroke:0.12px #000;">3550</span>
<span class="t" style="left:412.96px;top:266.49px;font-size:10.0px;line-height:13px;color:#000;-webkit-text-stroke:0.12px #000;">63,664</span>
<span class="t" style="left:488.16px;top:266.49px;font-size:10.0px;line-height:13px;color:#000;-webkit-text-stroke:0.12px #000;">355</span>
<span class="t" style="left:565.66px;top:266.49px;font-size:10.0px;line-height:13px;color:#000;-webkit-text-stroke:0.12px #000;">250</span>
<span class="t" style="left:653.21px;top:266.49px;font-size:10.0px;line-height:13px;color:#000;-webkit-text-stroke:0.12px #000;">250</span>
<span class="t" style="left:709.09px;top:266.49px;font-size:10.0px;line-height:13px;color:#000;-webkit-text-stroke:0.12px #000;">1905,264</span>
<span class="t" style="left:771.13px;top:266.49px;font-size:10.0px;line-height:13px;color:#000;-webkit-text-stroke:0.12px #000;">4155</span>
<span class="t" style="left:296.49px;top:282.31px;font-size:10.0px;line-height:13px;color:#000;-webkit-text-stroke:0.12px #000;">1905,264</span>
<span class="t" style="left:356.73px;top:282.31px;font-size:10.0px;line-height:13px;color:#000;-webkit-text-stroke:0.12px #000;">4155</span>
<span class="t" style="left:407.39px;top:282.31px;font-size:10.0px;line-height:13px;color:#000;-webkit-text-stroke:0.12px #000;">76,21056</span>
<span class="t" style="left:483.99px;top:282.31px;font-size:10.0px;line-height:13px;color:#000;-webkit-text-stroke:0.12px #000;">415,5</span>
<span class="t" style="left:565.66px;top:282.31px;font-size:10.0px;line-height:13px;color:#000;-webkit-text-stroke:0.12px #000;">250</span>
<span class="t" style="left:653.21px;top:282.31px;font-size:10.0px;line-height:13px;color:#000;-webkit-text-stroke:0.12px #000;">250</span>
<span class="t" style="left:709.09px;top:282.31px;font-size:10.0px;line-height:13px;color:#000;-webkit-text-stroke:0.12px #000;">2231,475</span>
<span class="t" style="left:766.96px;top:282.31px;font-size:10.0px;line-height:13px;color:#000;-webkit-text-stroke:0.12px #000;">4820,5</span>
<span class="t" style="left:296.49px;top:298.14px;font-size:10.0px;line-height:13px;color:#000;-webkit-text-stroke:0.12px #000;">2231,475</span>
<span class="t" style="left:352.56px;top:298.14px;font-size:10.0px;line-height:13px;color:#000;-webkit-text-stroke:0.12px #000;">4820,5</span>
<span class="t" style="left:401.83px;top:298.14px;font-size:10.0px;line-height:13px;color:#000;-webkit-text-stroke:0.12px #000;">89,2589824</span>
<span class="t" style="left:481.21px;top:298.14px;font-size:10.0px;line-height:13px;color:#000;-webkit-text-stroke:0.12px #000;">482,05</span>
<span class="t" style="left:565.66px;top:298.14px;font-size:10.0px;line-height:13px;color:#000;-webkit-text-stroke:0.12px #000;">250</span>
<span class="t" style="left:653.21px;top:298.14px;font-size:10.0px;line-height:13px;color:#000;-webkit-text-stroke:0.12px #000;">250</span>
<span class="t" style="left:709.09px;top:298.14px;font-size:10.0px;line-height:13px;color:#000;-webkit-text-stroke:0.12px #000;">2570,734</span>
<span class="t" style="left:764.18px;top:298.14px;font-size:10.0px;line-height:13px;color:#000;-webkit-text-stroke:0.12px #000;">5552,55</span>
<span class="t" style="left:296.49px;top:313.96px;font-size:10.0px;line-height:13px;color:#000;-webkit-text-stroke:0.12px #000;">2570,734</span>
<span class="t" style="left:349.78px;top:313.96px;font-size:10.0px;line-height:13px;color:#000;-webkit-text-stroke:0.12px #000;">5552,55</span>
<span class="t" style="left:399.05px;top:313.96px;font-size:10.0px;line-height:13px;color:#000;-webkit-text-stroke:0.12px #000;">102,8293417</span>
<span class="t" style="left:478.43px;top:313.96px;font-size:10.0px;line-height:13px;color:#000;-webkit-text-stroke:0.12px #000;">555,255</span>
<span class="t" style="left:565.66px;top:313.96px;font-size:10.0px;line-height:13px;color:#000;-webkit-text-stroke:0.12px #000;">250</span>
<span class="t" style="left:653.21px;top:313.96px;font-size:10.0px;line-height:13px;color:#000;-webkit-text-stroke:0.12px #000;">250</span>
<span class="t" style="left:709.09px;top:313.96px;font-size:10.0px;line-height:13px;color:#000;-webkit-text-stroke:0.12px #000;">2923,563</span>
<span class="t" style="left:761.39px;top:313.96px;font-size:10.0px;line-height:13px;color:#000;-webkit-text-stroke:0.12px #000;">6357,805</span>
<span class="t" style="left:296.49px;top:329.79px;font-size:10.0px;line-height:13px;color:#000;-webkit-text-stroke:0.12px #000;">2923,563</span>
<span class="t" style="left:346.99px;top:329.79px;font-size:10.0px;line-height:13px;color:#000;-webkit-text-stroke:0.12px #000;">6357,805</span>
<span class="t" style="left:399.42px;top:329.79px;font-size:10.0px;line-height:13px;color:#000;-webkit-text-stroke:0.12px #000;">116,9425154</span>
<span class="t" style="left:475.64px;top:329.79px;font-size:10.0px;line-height:13px;color:#000;-webkit-text-stroke:0.12px #000;">635,7805</span>
<span class="t" style="left:565.66px;top:329.79px;font-size:10.0px;line-height:13px;color:#000;-webkit-text-stroke:0.12px #000;">250</span>
<span class="t" style="left:653.21px;top:329.79px;font-size:10.0px;line-height:13px;color:#000;-webkit-text-stroke:0.12px #000;">250</span>
<span class="t" style="left:709.09px;top:329.79px;font-size:10.0px;line-height:13px;color:#000;-webkit-text-stroke:0.12px #000;">3290,505</span>
<span class="t" style="left:758.61px;top:329.79px;font-size:10.0px;line-height:13px;color:#000;-webkit-text-stroke:0.12px #000;">7243,5855</span>
<span class="t" style="left:296.49px;top:345.61px;font-size:10.0px;line-height:13px;color:#000;-webkit-text-stroke:0.12px #000;">3290,505</span>
<span class="t" style="left:346.99px;top:345.61px;font-size:10.0px;line-height:13px;color:#000;-webkit-text-stroke:0.12px #000;">7243,586</span>
<span class="t" style="left:401.83px;top:345.61px;font-size:10.0px;line-height:13px;color:#000;-webkit-text-stroke:0.12px #000;">131,620216</span>
<span class="t" style="left:472.86px;top:345.61px;font-size:10.0px;line-height:13px;color:#000;-webkit-text-stroke:0.12px #000;">724,35855</span>
<span class="t" style="left:565.66px;top:345.61px;font-size:10.0px;line-height:13px;color:#000;-webkit-text-stroke:0.12px #000;">250</span>
<span class="t" style="left:653.21px;top:345.61px;font-size:10.0px;line-height:13px;color:#000;-webkit-text-stroke:0.12px #000;">250</span>
<span class="t" style="left:709.09px;top:345.61px;font-size:10.0px;line-height:13px;color:#000;-webkit-text-stroke:0.12px #000;">3672,126</span>
<span class="t" style="left:758.61px;top:345.61px;font-size:10.0px;line-height:13px;color:#000;-webkit-text-stroke:0.12px #000;">8217,9441</span>
<span class="t" style="left:296.49px;top:361.44px;font-size:10.0px;line-height:13px;color:#000;-webkit-text-stroke:0.12px #000;">3672,126</span>
<span class="t" style="left:346.99px;top:361.44px;font-size:10.0px;line-height:13px;color:#000;-webkit-text-stroke:0.12px #000;">8217,944</span>
<span class="t" style="left:399.05px;top:361.44px;font-size:10.0px;line-height:13px;color:#000;-webkit-text-stroke:0.12px #000;">146,8850246</span>
<span class="t" style="left:470.08px;top:361.44px;font-size:10.0px;line-height:13px;color:#000;-webkit-text-stroke:0.12px #000;">821,794405</span>
<span class="t" style="left:565.66px;top:361.44px;font-size:10.0px;line-height:13px;color:#000;-webkit-text-stroke:0.12px #000;">250</span>
<span class="t" style="left:653.21px;top:361.44px;font-size:10.0px;line-height:13px;color:#000;-webkit-text-stroke:0.12px #000;">250</span>
<span class="t" style="left:709.47px;top:361.44px;font-size:10.0px;line-height:13px;color:#000;-webkit-text-stroke:0.12px #000;">4069,011</span>
<span class="t" style="left:758.61px;top:361.44px;font-size:10.0px;line-height:13px;color:#000;-webkit-text-stroke:0.12px #000;">9289,7385</span>
<span class="t" style="left:296.87px;top:377.26px;font-size:10.0px;line-height:13px;color:#000;-webkit-text-stroke:0.12px #000;">4069,011</span>
<span class="t" style="left:346.99px;top:377.26px;font-size:10.0px;line-height:13px;color:#000;-webkit-text-stroke:0.12px #000;">9289,738</span>
<span class="t" style="left:399.05px;top:377.26px;font-size:10.0px;line-height:13px;color:#000;-webkit-text-stroke:0.12px #000;">162,7604256</span>
<span class="t" style="left:467.30px;top:377.26px;font-size:10.0px;line-height:13px;color:#000;-webkit-text-stroke:0.12px #000;">928,9738455</span>
<span class="t" style="left:565.66px;top:377.26px;font-size:10.0px;line-height:13px;color:#000;-webkit-text-stroke:0.12px #000;">250</span>
<span class="t" style="left:653.21px;top:377.26px;font-size:10.0px;line-height:13px;color:#000;-webkit-text-stroke:0.12px #000;">250</span>
<span class="t" style="left:709.09px;top:377.26px;font-size:10.0px;line-height:13px;color:#000;-webkit-text-stroke:0.12px #000;">4481,771</span>
<span class="t" style="left:758.61px;top:377.26px;font-size:10.0px;line-height:13px;color:#000;-webkit-text-stroke:0.12px #000;">10468,712</span>
<span class="t" style="left:296.49px;top:393.09px;font-size:10.0px;line-height:13px;color:#000;-webkit-text-stroke:0.12px #000;">4481,771</span>
<span class="t" style="left:346.99px;top:393.09px;font-size:10.0px;line-height:13px;color:#000;-webkit-text-stroke:0.12px #000;">10468,71</span>
<span class="t" style="left:399.05px;top:393.09px;font-size:10.0px;line-height:13px;color:#000;-webkit-text-stroke:0.12px #000;">179,2708426</span>
<span class="t" style="left:470.08px;top:393.09px;font-size:10.0px;line-height:13px;color:#000;-webkit-text-stroke:0.12px #000;">1046,87123</span>
<span class="t" style="left:565.66px;top:393.09px;font-size:10.0px;line-height:13px;color:#000;-webkit-text-stroke:0.12px #000;">250</span>
<span class="t" style="left:653.21px;top:393.09px;font-size:10.0px;line-height:13px;color:#000;-webkit-text-stroke:0.12px #000;">250</span>
<span class="t" style="left:709.47px;top:393.09px;font-size:10.0px;line-height:13px;color:#000;-webkit-text-stroke:0.12px #000;">4911,042</span>
<span class="t" style="left:758.99px;top:393.09px;font-size:10.0px;line-height:13px;color:#000;-webkit-text-stroke:0.12px #000;">11765,584</span>
<span class="t" style="left:296.87px;top:408.91px;font-size:10.0px;line-height:13px;color:#000;-webkit-text-stroke:0.12px #000;">4911,042</span>
<span class="t" style="left:347.37px;top:408.91px;font-size:10.0px;line-height:13px;color:#000;-webkit-text-stroke:0.12px #000;">11765,58</span>
<span class="t" style="left:399.05px;top:408.91px;font-size:10.0px;line-height:13px;color:#000;-webkit-text-stroke:0.12px #000;">196,4416763</span>
<span class="t" style="left:467.67px;top:408.91px;font-size:10.0px;line-height:13px;color:#000;-webkit-text-stroke:0.12px #000;">1176,558353</span>
<span class="t" style="left:565.66px;top:408.91px;font-size:10.0px;line-height:13px;color:#000;-webkit-text-stroke:0.12px #000;">250</span>
<span class="t" style="left:653.21px;top:408.91px;font-size:10.0px;line-height:13px;color:#000;-webkit-text-stroke:0.12px #000;">250</span>
<span class="t" style="left:709.09px;top:408.91px;font-size:10.0px;line-height:13px;color:#000;-webkit-text-stroke:0.12px #000;">5357,484</span>
<span class="t" style="left:758.61px;top:408.91px;font-size:10.0px;line-height:13px;color:#000;-webkit-text-stroke:0.12px #000;">13192,142</span>
<span class="t" style="left:296.49px;top:424.74px;font-size:10.0px;line-height:13px;color:#000;-webkit-text-stroke:0.12px #000;">5357,484</span>
<span class="t" style="left:346.99px;top:424.74px;font-size:10.0px;line-height:13px;color:#000;-webkit-text-stroke:0.12px #000;">13192,14</span>
<span class="t" style="left:399.05px;top:424.74px;font-size:10.0px;line-height:13px;color:#000;-webkit-text-stroke:0.12px #000;">214,2993434</span>
<span class="t" style="left:467.30px;top:424.74px;font-size:10.0px;line-height:13px;color:#000;-webkit-text-stroke:0.12px #000;">1319,214188</span>
<span class="t" style="left:565.66px;top:424.74px;font-size:10.0px;line-height:13px;color:#000;-webkit-text-stroke:0.12px #000;">250</span>
<span class="t" style="left:653.21px;top:424.74px;font-size:10.0px;line-height:13px;color:#000;-webkit-text-stroke:0.12px #000;">250</span>
<span class="t" style="left:709.09px;top:424.74px;font-size:10.0px;line-height:13px;color:#000;-webkit-text-stroke:0.12px #000;">5821,783</span>
<span class="t" style="left:758.61px;top:424.74px;font-size:10.0px;line-height:13px;color:#000;-webkit-text-stroke:0.12px #000;">14761,356</span>
<span class="t" style="left:296.49px;top:440.56px;font-size:10.0px;line-height:13px;color:#000;-webkit-text-stroke:0.12px #000;">5821,783</span>
<span class="t" style="left:346.99px;top:440.56px;font-size:10.0px;line-height:13px;color:#000;-webkit-text-stroke:0.12px #000;">14761,36</span>
<span class="t" style="left:399.05px;top:440.56px;font-size:10.0px;line-height:13px;color:#000;-webkit-text-stroke:0.12px #000;">232,8713171</span>
<span class="t" style="left:467.30px;top:440.56px;font-size:10.0px;line-height:13px;color:#000;-webkit-text-stroke:0.12px #000;">1476,135607</span>
<span class="t" style="left:565.66px;top:440.56px;font-size:10.0px;line-height:13px;color:#000;-webkit-text-stroke:0.12px #000;">250</span>
<span class="t" style="left:653.21px;top:440.56px;font-size:10.0px;line-height:13px;color:#000;-webkit-text-stroke:0.12px #000;">250</span>
<span class="t" style="left:709.09px;top:440.56px;font-size:10.0px;line-height:13px;color:#000;-webkit-text-stroke:0.12px #000;">6304,654</span>
<span class="t" style="left:758.61px;top:440.56px;font-size:10.0px;line-height:13px;color:#000;-webkit-text-stroke:0.12px #000;">16487,492</span>
<span class="t" style="left:296.49px;top:456.39px;font-size:10.0px;line-height:13px;color:#000;-webkit-text-stroke:0.12px #000;">6304,654</span>
<span class="t" style="left:346.99px;top:456.39px;font-size:10.0px;line-height:13px;color:#000;-webkit-text-stroke:0.12px #000;">16487,49</span>
<span class="t" style="left:399.05px;top:456.39px;font-size:10.0px;line-height:13px;color:#000;-webkit-text-stroke:0.12px #000;">252,1861698</span>
<span class="t" style="left:467.30px;top:456.39px;font-size:10.0px;line-height:13px;color:#000;-webkit-text-stroke:0.12px #000;">1648,749168</span>
<span class="t" style="left:565.66px;top:456.39px;font-size:10.0px;line-height:13px;color:#000;-webkit-text-stroke:0.12px #000;">250</span>
<span class="t" style="left:653.21px;top:456.39px;font-size:10.0px;line-height:13px;color:#000;-webkit-text-stroke:0.12px #000;">250</span>
<span class="t" style="left:711.88px;top:456.39px;font-size:10.0px;line-height:13px;color:#000;-webkit-text-stroke:0.12px #000;">6806,84</span>
<span class="t" style="left:758.61px;top:456.39px;font-size:10.0px;line-height:13px;color:#000;-webkit-text-stroke:0.12px #000;">18386,241</span>
<span class="t" style="left:299.28px;top:472.21px;font-size:10.0px;line-height:13px;color:#000;-webkit-text-stroke:0.12px #000;">6806,84</span>
<span class="t" style="left:346.99px;top:472.21px;font-size:10.0px;line-height:13px;color:#000;-webkit-text-stroke:0.12px #000;">18386,24</span>
<span class="t" style="left:399.05px;top:472.21px;font-size:10.0px;line-height:13px;color:#000;-webkit-text-stroke:0.12px #000;">272,2736166</span>
<span class="t" style="left:467.30px;top:472.21px;font-size:10.0px;line-height:13px;color:#000;-webkit-text-stroke:0.12px #000;">1838,624085</span>
<span class="t" style="left:565.66px;top:472.21px;font-size:10.0px;line-height:13px;color:#000;-webkit-text-stroke:0.12px #000;">250</span>
<span class="t" style="left:653.21px;top:472.21px;font-size:10.0px;line-height:13px;color:#000;-webkit-text-stroke:0.12px #000;">250</span>
<span class="t" style="left:709.47px;top:472.21px;font-size:10.0px;line-height:13px;color:#000;-webkit-text-stroke:0.12px #000;">7329,114</span>
<span class="t" style="left:758.61px;top:472.21px;font-size:10.0px;line-height:13px;color:#000;-webkit-text-stroke:0.12px #000;">20474,865</span>
<span class="t" style="left:296.87px;top:488.04px;font-size:10.0px;line-height:13px;color:#000;-webkit-text-stroke:0.12px #000;">7329,114</span>
<span class="t" style="left:346.99px;top:488.04px;font-size:10.0px;line-height:13px;color:#000;-webkit-text-stroke:0.12px #000;">20474,86</span>
<span class="t" style="left:399.05px;top:488.04px;font-size:10.0px;line-height:13px;color:#000;-webkit-text-stroke:0.12px #000;">293,1645613</span>
<span class="t" style="left:467.30px;top:488.04px;font-size:10.0px;line-height:13px;color:#000;-webkit-text-stroke:0.12px #000;">2047,486493</span>
<span class="t" style="left:565.66px;top:488.04px;font-size:10.0px;line-height:13px;color:#000;-webkit-text-stroke:0.12px #000;">250</span>
<span class="t" style="left:653.21px;top:488.04px;font-size:10.0px;line-height:13px;color:#000;-webkit-text-stroke:0.12px #000;">250</span>
<span class="t" style="left:709.09px;top:488.04px;font-size:10.0px;line-height:13px;color:#000;-webkit-text-stroke:0.12px #000;">7872,279</span>
<span class="t" style="left:758.61px;top:488.04px;font-size:10.0px;line-height:13px;color:#000;-webkit-text-stroke:0.12px #000;">22772,351</span>
<span class="t" style="left:296.49px;top:503.86px;font-size:10.0px;line-height:13px;color:#000;-webkit-text-stroke:0.12px #000;">7872,279</span>
<span class="t" style="left:346.99px;top:503.86px;font-size:10.0px;line-height:13px;color:#000;-webkit-text-stroke:0.12px #000;">22772,35</span>
<span class="t" style="left:399.42px;top:503.86px;font-size:10.0px;line-height:13px;color:#000;-webkit-text-stroke:0.12px #000;">314,8911437</span>
<span class="t" style="left:467.30px;top:503.86px;font-size:10.0px;line-height:13px;color:#000;-webkit-text-stroke:0.12px #000;">2277,235142</span>
<span class="t" style="left:565.66px;top:503.86px;font-size:10.0px;line-height:13px;color:#000;-webkit-text-stroke:0.12px #000;">250</span>
<span class="t" style="left:653.21px;top:503.86px;font-size:10.0px;line-height:13px;color:#000;-webkit-text-stroke:0.12px #000;">250</span>
<span class="t" style="left:711.88px;top:503.86px;font-size:10.0px;line-height:13px;color:#000;-webkit-text-stroke:0.12px #000;">8437,17</span>
<span class="t" style="left:758.61px;top:503.86px;font-size:10.0px;line-height:13px;color:#000;-webkit-text-stroke:0.12px #000;">25299,587</span>
<span class="t" style="left:299.28px;top:519.69px;font-size:10.0px;line-height:13px;color:#000;-webkit-text-stroke:0.12px #000;">8437,17</span>
<span class="t" style="left:346.99px;top:519.69px;font-size:10.0px;line-height:13px;color:#000;-webkit-text-stroke:0.12px #000;">25299,59</span>
<span class="t" style="left:399.05px;top:519.69px;font-size:10.0px;line-height:13px;color:#000;-webkit-text-stroke:0.12px #000;">337,4867895</span>
<span class="t" style="left:467.30px;top:519.69px;font-size:10.0px;line-height:13px;color:#000;-webkit-text-stroke:0.12px #000;">2529,958657</span>
<span class="t" style="left:565.66px;top:519.69px;font-size:10.0px;line-height:13px;color:#000;-webkit-text-stroke:0.12px #000;">250</span>
<span class="t" style="left:653.21px;top:519.69px;font-size:10.0px;line-height:13px;color:#000;-webkit-text-stroke:0.12px #000;">250</span>
<span class="t" style="left:709.09px;top:519.69px;font-size:10.0px;line-height:13px;color:#000;-webkit-text-stroke:0.12px #000;">9024,657</span>
<span class="t" style="left:758.61px;top:519.69px;font-size:10.0px;line-height:13px;color:#000;-webkit-text-stroke:0.12px #000;">28079,545</span>
<div class="b" style="left:1px;top:215.4px;width:813.5px;height:1.1px;background:#b9b9b9;"></div>
<div class="b" style="left:292px;top:214.4px;width:51px;height:2px;background:#107c41;"></div>
<div class="b" style="left:290.8px;top:246.65px;width:53.2px;height:18.825px;border:1.9px solid #0f703b;"></div>
<div class="b" style="left:340.9px;top:261.675px;width:5.5px;height:5.5px;background:#107c41;border:1px solid #fff;"></div>
<svg class="b" style="left:706px;top:517.0749999999999px;" width="15.4" height="15.8" viewBox="0 0 15.4 15.8"><rect x="0" y="0" width="15.4" height="15.8" fill="#fff"/><rect x="0.5" y="0.5" width="14.4" height="14.8" fill="#fff" stroke="#c4c4c4"/><rect x="2.6" y="3" width="4.2" height="2.8" fill="#2f6fe8"/><rect x="7.4" y="3.2" width="3.8" height="2.4" fill="#fff" stroke="#b0b0b0" stroke-width="0.7"/><rect x="2.9" y="6.8" width="3.8" height="2.4" fill="#fff" stroke="#b0b0b0" stroke-width="0.7"/><path d="M2.6 10.6H6.8V13H2.6" fill="none" stroke="#b8b8b8" stroke-width="0.7" stroke-dasharray="1.2 0.8"/><path d="M10.8 9.6V13.2M9 11.4H12.6" stroke="#8a8a8a" stroke-width="1"/></svg>
<div class="b" style="left:1px;top:541.7px;width:831px;height:45px;background:#f0f0f0;"></div>
<div class="b" style="left:814.5px;top:199px;width:17px;height:343px;background:#f0f0f0;"></div>
<div class="b" style="left:815px;top:200px;width:15px;height:341px;background:#f6f6f6;border-radius:7px;"></div>
<svg class="b" style="left:818.5px;top:204px;" width="9" height="7" viewBox="0 0 9 7"><path d="M4.5 0.8L8.3 6H0.7Z" fill="#6b6b6b"/></svg>
<div class="b" style="left:819.4px;top:215px;width:6.9px;height:209.8px;background:#737373;border-radius:3.5px;"></div>
<svg class="b" style="left:818.5px;top:533px;" width="9" height="7" viewBox="0 0 9 7"><path d="M4.5 6.2L8.3 1H0.7Z" fill="#6b6b6b"/></svg>
<svg class="b" style="left:20px;top:548px;" width="10" height="10" viewBox="0 0 10 10"><path d="M6.5 1.5L3 5L6.5 8.5" fill="none" stroke="#a6a6a6" stroke-width="1"/></svg>
<svg class="b" style="left:46px;top:548px;" width="10" height="10" viewBox="0 0 10 10"><path d="M3.5 1.5L7 5L3.5 8.5" fill="none" stroke="#a6a6a6" stroke-width="1"/></svg>
<div class="b" style="left:92.5px;top:541px;width:42px;height:23px;background:#fff;border-radius:0 0 5px 5px;"></div>
<div class="b" style="left:88.5px;top:541.7px;width:4px;height:4px;background:radial-gradient(circle at 0 100%, #f0f0f0 3.6px, #fff 4.2px);"></div>
<div class="b" style="left:134.5px;top:541.7px;width:4px;height:4px;background:radial-gradient(circle at 100% 100%, #f0f0f0 3.6px, #fff 4.2px);"></div>
<span class="t" style="left:98.95px;top:546.50px;font-size:10px;line-height:13px;color:#222;font-weight:bold;letter-spacing:-0.137px;">Лист1</span>
<div class="b" style="left:98.5px;top:559.2px;width:29.5px;height:1.8px;background:#107c41;"></div>
<div class="b" style="left:137px;top:547.5px;width:1px;height:13px;background:#c8c8c8;"></div>
<svg class="b" style="left:170.5px;top:548.5px;" width="9" height="9" viewBox="0 0 9 9"><path d="M4.5 0.5V8.5M0.5 4.5H8.5" stroke="#555" stroke-width="0.9"/></svg>
<div class="b" style="left:500px;top:550.2px;width:1.8px;height:1.8px;background:#9c9c9c;"></div>
<div class="b" style="left:500px;top:553.5px;width:1.8px;height:1.8px;background:#9c9c9c;"></div>
<div class="b" style="left:500px;top:556.8px;width:1.8px;height:1.8px;background:#9c9c9c;"></div>
<div class="b" style="left:514px;top:546.5px;width:304px;height:15px;background:#f6f6f6;border-radius:7px;"></div>
<svg class="b" style="left:517px;top:549.5px;" width="7" height="9" viewBox="0 0 7 9"><path d="M0.8 4.5L6 0.7V8.3Z" fill="#6b6b6b"/></svg>
<div class="b" style="left:527px;top:550.5px;width:236px;height:7px;background:#6e6e6e;border-radius:3.5px;"></div>
<svg class="b" style="left:806px;top:549.5px;" width="7" height="9" viewBox="0 0 7 9"><path d="M6.2 4.5L1 0.7V8.3Z" fill="#6b6b6b"/></svg>
<div class="b" style="left:1px;top:567px;width:830px;height:18px;background:#f5f5f5;"></div>
<div class="b" style="left:1px;top:566.7px;width:830px;height:1.1px;background:#d9d9d9;"></div>
<span class="t" style="left:6.00px;top:570.80px;font-size:8.8px;line-height:11px;color:#333;letter-spacing:0.304px;-webkit-text-stroke:0.15px #333;">Готово</span>
<span class="t" style="left:50.50px;top:570.80px;font-size:8.8px;line-height:11px;color:#333;letter-spacing:-0.004px;-webkit-text-stroke:0.15px #333;">Scroll Lock</span>
<div class="b" style="left:583px;top:567.8px;width:31px;height:16.4px;background:#dadada;"></div>
<svg class="b" style="left:592.8px;top:570px;" width="12" height="11" viewBox="0 0 12 11"><path d="M0.5 0.5H11.5V10.5H0.5ZM0.5 3.8H11.5M0.5 7.2H11.5M4.2 0.5V10.5M7.8 0.5V10.5" fill="none" stroke="#555" stroke-width="0.9"/></svg>
<svg class="b" style="left:625px;top:570px;" width="12" height="11" viewBox="0 0 12 11"><rect x="0.5" y="0.5" width="11" height="10" fill="none" stroke="#666" stroke-width="0.9"/><rect x="3" y="2.6" width="6" height="5.8" fill="none" stroke="#666" stroke-width="0.9"/><path d="M4.4 4.6H7.6M4.4 6.4H7.6" stroke="#777" stroke-width="0.6"/></svg>
<svg class="b" style="left:655.8px;top:570px;" width="13" height="11" viewBox="0 0 13 11"><path d="M0.5 0.5H11.8V10.5H0.5Z M3.6 0.5V6H8.4V0.5" fill="none" stroke="#666" stroke-width="0.8"/></svg>
<div class="b" style="left:682px;top:575.8px;width:6px;height:1px;background:#555;"></div>
<div class="b" style="left:693.5px;top:576px;width:77px;height:1px;background:#c6c6c6;"></div>
<div class="b" style="left:730.7px;top:571px;width:4.4px;height:9.4px;background:#555;border-radius:0.8px;"></div>
<svg class="b" style="left:774px;top:572px;" width="9" height="9" viewBox="0 0 9 9"><path d="M4.5 1.6V7.4M1.6 4.5H7.4" stroke="#555" stroke-width="0.9"/></svg>
<span class="t" style="left:793.50px;top:570.80px;font-size:8.8px;line-height:11px;color:#333;letter-spacing:-0.390px;-webkit-text-stroke:0.15px #333;">100 %</span>
<div class="b" style="left:0;top:0;width:832px;height:585px;border-radius:7px;border:1px solid #27794b;border-right-width:1.2px;pointer-events:none;"></div>
<div class="b" style="left:0px;top:583.8px;width:832px;height:1.2px;background:#2a7d4f;"></div>
<div class="b" style="left:6.9px;top:211.8px;width:239.29999999999998px;height:40.39999999999998px;border:3.3px solid #0a0a0a;border-radius:8.5px;box-shadow:0 2px 4px rgba(0,0,0,0.5), inset 0 2px 3px rgba(0,0,0,0.3);"></div>
<div class="b" style="left:283px;top:225.4px;width:114.5px;height:29.599999999999994px;border:3.3px solid #0a0a0a;border-radius:8.5px;box-shadow:0 2px 4px rgba(0,0,0,0.5), inset 0 2px 3px rgba(0,0,0,0.3);"></div>
<div class="b" style="left:229.9px;top:186.0px;width:34.8px;height:34.8px;border-radius:50%;background:rgba(50,50,50,0.93);"></div>
<span class="t" style="left:240.49px;top:187.70px;font-size:24.5px;line-height:32px;color:#fff;font-weight:bold;text-shadow:0 1px 2px rgba(0,0,0,0.6);">1</span>
<div class="b" style="left:383.40000000000003px;top:205.10000000000002px;width:34.4px;height:34.4px;border-radius:50%;background:rgba(50,50,50,0.93);"></div>
<span class="t" style="left:394.20px;top:207.60px;font-size:23px;line-height:30px;color:#fff;font-weight:bold;text-shadow:0 1px 2px rgba(0,0,0,0.6);">2</span>
<div class="b" style="left:240.2px;top:208.8px;width:5.4px;height:4.4px;background:#3b3b3b;"></div>
<div class="b" style="left:251.2px;top:208.8px;width:4.8px;height:4.4px;background:#3b3b3b;"></div>
</div></body></html>
